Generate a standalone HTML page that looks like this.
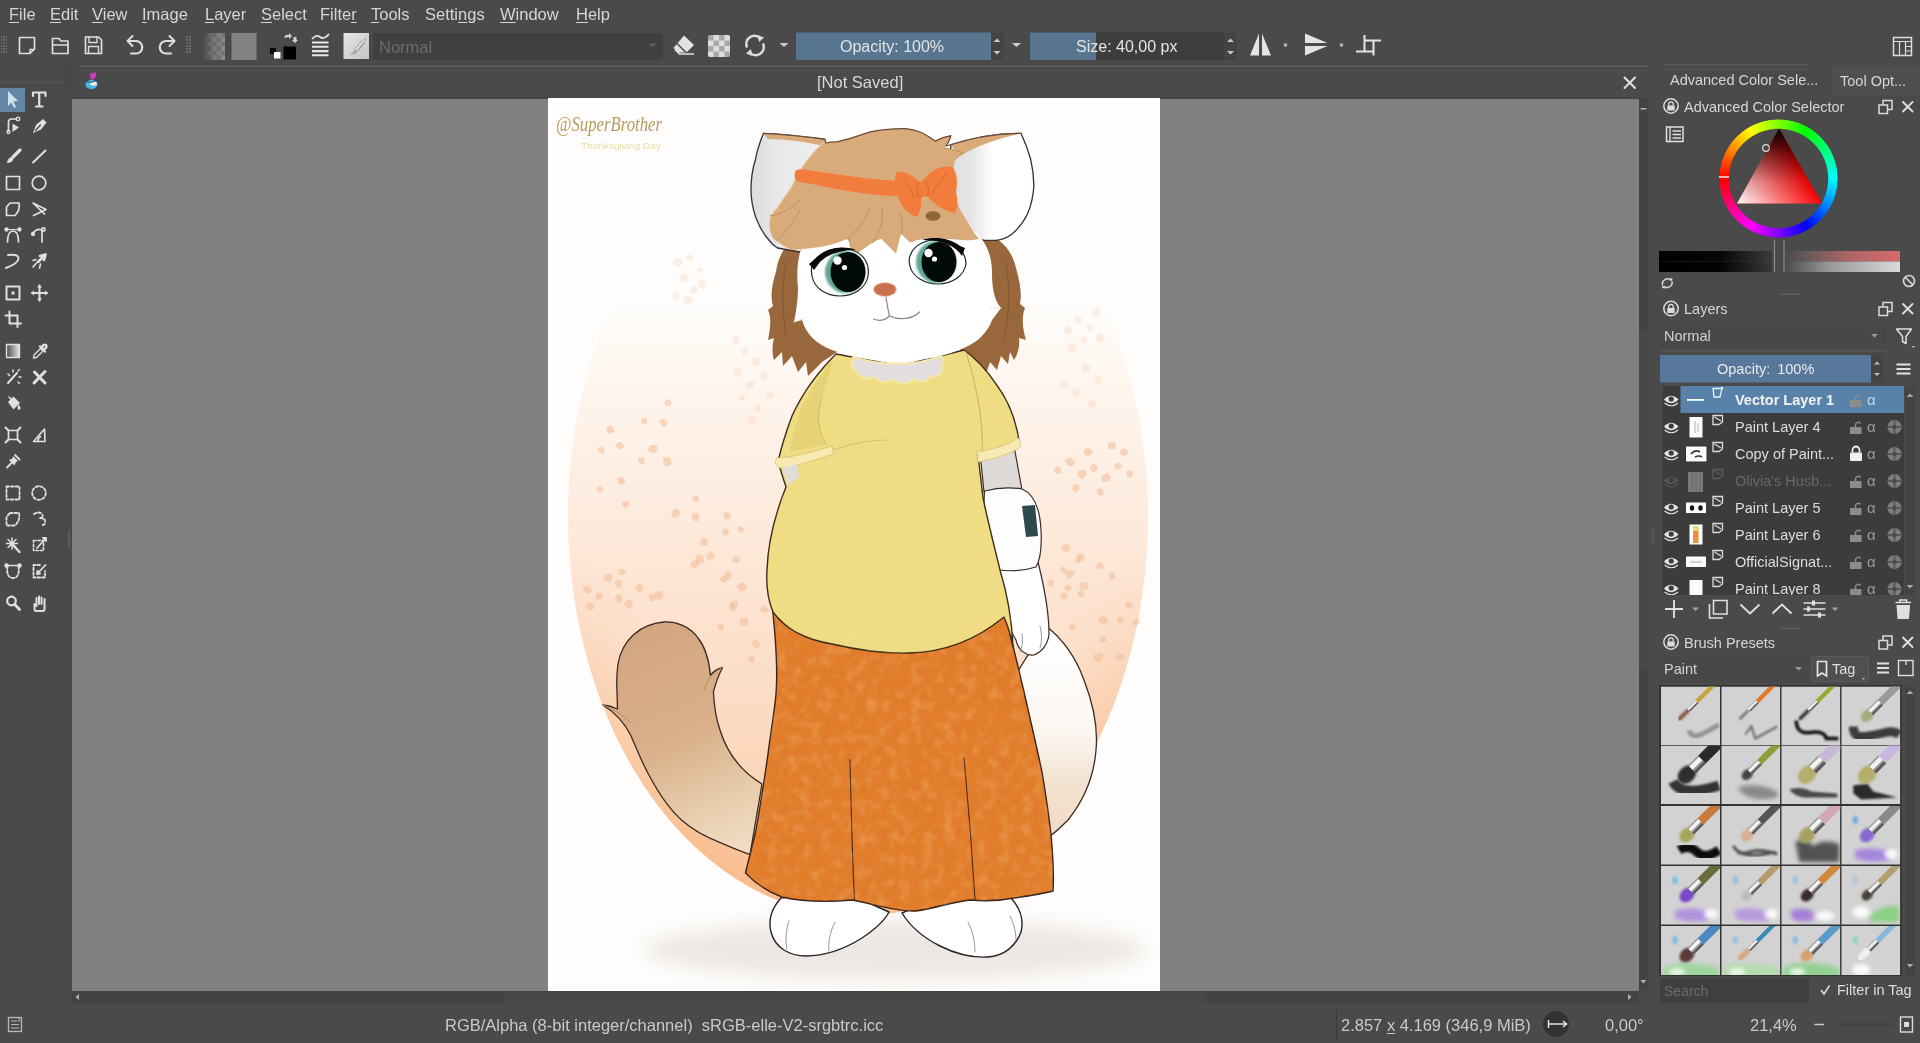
<!DOCTYPE html>
<html lang="en">
<head>
<meta charset="utf-8">
<title>Krita</title>
<style>
*{box-sizing:border-box;margin:0;padding:0}
html,body{width:1920px;height:1043px;overflow:hidden;background:#4a4a4a}
body{position:relative;font-family:"Liberation Sans","DejaVu Sans",sans-serif;font-size:15px;color:#d6d6d6}
.a{position:absolute}
.t{position:absolute;white-space:nowrap;line-height:20px;will-change:transform}
svg{position:absolute;overflow:visible}
/* menu */
#menubar{left:0;top:0;width:1920px;height:28px;background:#4a4a4a}
#menubar .t{top:4px;font-size:16.5px}
#menubar u{text-decoration-thickness:1px;text-underline-offset:2px}
/* toolbar */
#toolbar{left:0;top:28px;width:1920px;height:36px;background:#4a4a4a}
/* tab bar */
#tabbar{left:72px;top:66px;width:1576px;height:32px;background:#4a4a4a}
/* canvas */
#canvas{left:72px;top:98.500px;width:1567px;height:892.500px;background:#808080;box-shadow:0 -1.500px 0 #424242}
#page{left:548px;top:98px;width:612px;height:893px;background:#fff}
#vscroll{left:1639px;top:98px;width:9px;height:893px;background:#434343}
#hscroll{left:72px;top:991px;width:1567px;height:12px;background:#434343}
/* status */
#status{left:0;top:1005px;width:1920px;height:38px}
#status .t{top:10px;font-size:16.5px;color:#c9c9c9}
/* dock */
#dock{left:1656px;top:66px;width:264px;height:939px}
.dtitle{font-size:14.5px;color:#d6d6d6}
</style>
</head>
<body>
<div id="menubar" class="a">
<span class="t" style="left:9px"><u>F</u>ile</span>
<span class="t" style="left:50px"><u>E</u>dit</span>
<span class="t" style="left:92px"><u>V</u>iew</span>
<span class="t" style="left:142px"><u>I</u>mage</span>
<span class="t" style="left:205px"><u>L</u>ayer</span>
<span class="t" style="left:261px"><u>S</u>elect</span>
<span class="t" style="left:320px">Filte<u>r</u></span>
<span class="t" style="left:371px"><u>T</u>ools</span>
<span class="t" style="left:425px">Setti<u>n</u>gs</span>
<span class="t" style="left:500px"><u>W</u>indow</span>
<span class="t" style="left:576px"><u>H</u>elp</span>
</div>
<div id="toolbar" class="a">
<!--TB0--><svg style="left:0;top:0" width="1920" height="36" viewBox="0 28 1920 36">
<defs>
<pattern id="grip" width="3" height="3" patternUnits="userSpaceOnUse"><rect width="3" height="3" fill="#4a4a4a"/><rect x="0" y="0" width="2" height="2" fill="#6a6a6a"/></pattern>
<pattern id="chk" x="203" y="33" width="9" height="9" patternUnits="userSpaceOnUse"><rect width="9" height="9" fill="#8c8c8c"/><rect width="4.5" height="4.5" fill="#767676"/><rect x="4.5" y="4.5" width="4.5" height="4.5" fill="#767676"/></pattern>
<pattern id="chk2" x="708" y="35" width="11" height="11" patternUnits="userSpaceOnUse"><rect width="11" height="11" fill="#dedede"/><rect width="5.5" height="5.5" fill="#a8a8a8"/><rect x="5.5" y="5.5" width="5.5" height="5.5" fill="#a8a8a8"/></pattern>
<linearGradient id="fadeL" x1="0" x2="1"><stop offset="0" stop-color="#4a4a4a"/><stop offset="0.45" stop-color="#4a4a4a" stop-opacity="0.3"/><stop offset="1" stop-color="#4a4a4a" stop-opacity="0"/></linearGradient>
<linearGradient id="bp" x1="0" x2="1" y1="0" y2="1"><stop offset="0" stop-color="#e6e6e6"/><stop offset="1" stop-color="#c4c4c4"/></linearGradient>
</defs>
<!-- grips -->
<rect x="1" y="36" width="6" height="18" fill="url(#grip)"/>
<rect x="185" y="36" width="6" height="18" fill="url(#grip)"/>
<g fill="none" stroke="#dedede" stroke-width="1.7" stroke-linejoin="round" stroke-linecap="round">
<!-- new -->
<path d="M19.5 37.5 H34.5 V49 L30 53.5 H19.5 Z"/>
<path d="M30 53 V49.5 H34" stroke-width="1.4"/>
<!-- open -->
<path d="M52.5 53.5 V38.5 H59 L61 41 H68 V53.5 Z"/>
<path d="M53 45 H68" />
<!-- save -->
<path d="M85.5 37 H98.5 L101.5 40 V53.5 H85.5 Z"/>
<path d="M89 37 V42.5 H97 V37" stroke-width="1.4"/>
<path d="M88.5 53 V46.5 H98.5 V53" stroke-width="1.4"/>
<!-- undo -->
<path d="M129 41 H136 A6 6 0 0 1 136 53.5 H131" stroke-width="2.2"/>
<path d="M132.5 36 L127.5 41 L132.5 46" stroke-width="2"/>
<!-- redo -->
<path d="M173 41 H166 A6 6 0 0 0 166 53.5 H171" stroke-width="2.2"/>
<path d="M169.500 36 L174.500 41 L169.500 46" stroke-width="2"/>
</g>
<!-- pattern swatch -->
<rect x="203" y="33" width="22" height="27" fill="url(#chk)"/>
<rect x="203" y="33" width="22" height="27" fill="url(#fadeL)"/>
<!-- gradient swatch -->
<rect x="231.500" y="33" width="25" height="27" fill="#828282"/>
<!-- fg/bg -->
<rect x="283.500" y="46.500" width="12.500" height="13" fill="#000"/>
<rect x="270" y="48" width="6" height="6" fill="#0a0a0a"/>
<rect x="274" y="52" width="6.500" height="6.500" fill="#fff"/>
<path d="M284 37 q2 -3 5 -2 l0 -2 l3 3 l-3 3 l0 -2 q-2 -0.500 -3 1z M295 43 l-3 -3 l1.500 0 l0 -3 l3 0 l0 3 l1.500 0z" fill="#d0d0d0"/>
<!-- brush settings -->
<g stroke="#e6e6e6" stroke-width="2.100" fill="none">
<path d="M312 42.500 H328.500 M312 46.800 H328.500 M312 51.100 H328.500 M312 55.300 H328.500"/>
<path d="M312 39 q4 -5 8 -2 t9 -3" stroke-width="1.800"/>
</g>
<!-- brush preset -->
<rect x="343.500" y="33" width="25.500" height="26" fill="url(#bp)"/>
<path d="M353 52 q4 -9 13 -14 q1 3 -3 8 q-4 5 -8 8 q-3 1 -5 0 q2 -1 3 -2z" fill="#a9a9a9"/>
<path d="M356 50 q4 -6 9 -10" stroke="#e8e8e8" stroke-width="1.500" fill="none"/>
<!-- combobox -->
<rect x="373" y="33" width="290" height="27" rx="2" fill="#404040"/>
<path d="M648.500 43.500 l4 4 l4 -4z" fill="#5e5e5e"/>
<!-- eraser -->
<path d="M684 35.500 L694 45 L686.500 52.500 H678 L673.500 48 Z" fill="#e2e2e2"/>
<path d="M675 49.500 L679.500 54 H694" stroke="#e2e2e2" stroke-width="1.600" fill="none"/>
<path d="M677 43.500 L686 52.500" stroke="#4a4a4a" stroke-width="1.600"/>
<!-- preserve alpha -->
<rect x="708" y="35" width="22" height="22" rx="2" fill="url(#chk2)"/>
<!-- reload -->
<g fill="none" stroke="#dedede" stroke-width="2.400">
<path d="M747 47.500 A8.200 8.200 0 0 1 760.500 38.500"/>
<path d="M763 43.500 A8.200 8.200 0 0 1 749.500 52.500"/>
</g>
<path d="M757.500 35 l6.500 2.500 l-5 4.500z M752.500 56 l-6.500 -2.500 l5 -4.500z" fill="#dedede"/>
<!-- small arrows -->
<path d="M779.500 43 l4.500 4 l4.500 -4z" fill="#cfcfcf"/>
<path d="M1012 43 l4.500 4 l4.500 -4z" fill="#cfcfcf"/>
<!-- opacity slider -->
<rect x="796" y="32.500" width="195" height="27.500" fill="#57758f"/>
<rect x="991" y="33" width="12" height="27" fill="#444"/>
<path d="M993.500 42 l3.500 -3.500 l3.500 3.500z M993.500 51 l3.500 3.500 l3.500 -3.500z" fill="#c8c8c8"/>
<!-- size slider -->
<rect x="1030" y="32.500" width="194" height="27.500" fill="#3d3d3d"/>
<rect x="1030" y="32.500" width="66" height="27.500" fill="#57758f"/>
<rect x="1224" y="33" width="13" height="27" fill="#444"/>
<path d="M1227 42 l3.500 -3.500 l3.500 3.500z M1227 51 l3.500 3.500 l3.500 -3.500z" fill="#c8c8c8"/>
<!-- mirror h -->
<path d="M1259 33.500 V55.500 H1250z M1262 33.500 V55.500 H1271z" fill="#e4e4e4"/>
<circle cx="1285.500" cy="45" r="1.800" fill="#bdbdbd"/>
<!-- mirror v -->
<path d="M1305 33.500 L1327.500 43 H1305z M1305 55.500 L1327.500 46 H1305z" fill="#e4e4e4"/>
<circle cx="1341.500" cy="45" r="1.800" fill="#bdbdbd"/>
<!-- wrap -->
<g stroke="#e4e4e4" stroke-width="2" fill="none">
<path d="M1364.500 35 V51.500 M1356 51.500 H1373 M1373.500 55.500 V40.500 M1365 40.500 H1381"/>
</g>
<!-- workspace chooser -->
<g stroke="#dcdcdc" stroke-width="1.500" fill="none">
<rect x="1893.500" y="37.500" width="18" height="18"/>
<path d="M1893.500 41.500 H1911.500 M1899.500 41.500 V55.500 M1905.500 41.500 V55.500 M1905.500 46.500 H1911.500 M1905.500 51 H1911.500" stroke-width="1.200"/>
</g>
</svg>
<span class="t" style="left:379px;top:9px;font-size:16.5px;color:#6b6b6b">Normal</span>
<span class="t" style="left:840px;top:9px;font-size:16px;color:#e4e4e4">Opacity: 100%</span>
<span class="t" style="left:1076px;top:9px;font-size:16px;color:#e4e4e4">Size: 40,00 px</span>
<!--TB1-->
</div>
<div id="tabbar" class="a">
<!--TA0--><div class="a tabline" style="left:8px;top:-2px;width:1568px;height:1px;background:#404040"></div><div class="a tabline" style="left:8px;top:-1px;width:1568px;height:1.500px;background:#5b5b5b"></div><div class="a tabline" style="left:8px;top:3.500px;width:1568px;height:1px;background:#525252"></div>
<svg style="left:12px;top:5px" width="16" height="20" viewBox="84 70 16 20">
<path d="M90 72 q2 -1 3 1 l2 -2 q2 1 1 4 q-1 3 -5 4z" fill="#d13cc0"/>
<ellipse cx="91.500" cy="83.500" rx="6" ry="4.500" fill="#49b7e8"/>
<ellipse cx="93.500" cy="82.500" rx="3.500" ry="2" fill="#f0f0e6"/>
<path d="M86 80 q5 3 11 -1" stroke="#2a4a6a" stroke-width="1" fill="none"/>
</svg>
<span class="t" style="left:745px;top:6px;font-size:16.5px;color:#d8d8d8">[Not Saved]</span>
<svg style="left:1550px;top:9px" width="16" height="16" viewBox="0 0 16 16"><path d="M2.500 2.500 L13 13 M13 2.500 L2.500 13" stroke="#e4e4e4" stroke-width="2" stroke-linecap="round"/></svg>
<!--TA1-->
</div>
<div id="toolbox" class="a" style="left:0;top:64px;width:70px;height:941px">
<!--TX0--><div class="a" style="left:0;top:18px;width:64px;height:1px;background:#565656"></div>
<div class="a" style="left:64px;top:0;width:7px;height:24px;background:#464646"></div>
<div class="a" style="left:0;top:24px;width:25px;height:24px;background:#6585a7"></div>
<svg style="left:0;top:0" width="70" height="560" viewBox="0 64 70 560">
<g fill="none" stroke="#e0e0e0" stroke-width="1.700" stroke-linecap="round" stroke-linejoin="round">
<!-- row 99 -->
<path d="M8 91 V106 L11.500 102.500 L14 108 L16 107 L13.500 101.500 L18 101 Z" fill="#cfe0ee" stroke="none"/>
<path d="M33 96 V92.500 H45.500 V96 M39.200 92.500 V106 M36 106.500 H42.500" stroke-width="2.200"/>
<!-- row 125 -->
<path d="M8.500 131 V122 q0 -3 3 -3 H16.500"/>
<circle cx="18" cy="119" r="1.800" stroke-width="1.300"/>
<circle cx="8.500" cy="132" r="1.500" stroke-width="1.300"/>
<path d="M12.500 123.500 V132 L19 127.500 Z" fill="#e0e0e0" stroke="none"/>
<path d="M33 133 L36 125 L43 119 L46.500 122.500 L41 129.500 Z" fill="#e0e0e0" stroke="none"/>
<path d="M35.500 130.500 L40.500 125" stroke="#4a4a4a" stroke-width="1.300"/>
<!-- row 156 -->
<path d="M20 150 L13 157" stroke-width="3.200"/>
<path d="M11.500 157 q-4 1 -4.500 6 q5 0 6.500 -4z" fill="#e0e0e0" stroke="none"/>
<path d="M33 162.500 L45.500 150.500" stroke-width="2"/>
<!-- row 183 -->
<rect x="6.500" y="176.500" width="13" height="13" />
<circle cx="39" cy="183" r="6.800"/>
<!-- row 209 -->
<path d="M10 203 H19 Q20.500 210 15 215.500 H6.500 V207 Z"/>
<path d="M44.500 214 L33 203 L46 209.500 L33.500 215.500"/>
<!-- row 235 -->
<path d="M7.500 242 Q7.500 231 13 231 Q18.500 231 18.500 242"/>
<path d="M6 229.500 H20" stroke-width="1.200"/>
<circle cx="6.500" cy="229.500" r="1.300" fill="#e0e0e0"/><circle cx="19.500" cy="229.500" r="1.300" fill="#e0e0e0"/>
<path d="M33 233 q4 -5 9 -3 M42 230 V242" />
<circle cx="33" cy="234" r="1.300" fill="#e0e0e0"/><circle cx="43.500" cy="229.500" r="1.600" />
<!-- row 261 -->
<path d="M8 255 q10 -1 10.500 3 q0.500 5 -12.500 10" stroke-width="2"/>
<path d="M45.500 254.500 L38 262 M45.500 254.500 L40 256 M45.500 254.500 L44 260" stroke-width="2.600"/>
<path d="M36.500 263 l-3.500 4 M40.500 264 l-1 4 M36 259.500 l-3 1" stroke-width="1.600"/>
<!-- row 293 -->
<rect x="6.500" y="286.500" width="13" height="13" stroke-width="2"/>
<rect x="11.500" y="291.500" width="3" height="3" fill="#e0e0e0" stroke="none"/>
<path d="M39.500 285.500 V300.500 M32 293 H47" stroke-width="2"/>
<path d="M39.500 284.500 l-2.500 3 h5z M39.500 301.500 l-2.500 -3 h5z M31 293 l3 -2.500 v5z M48 293 l-3 -2.500 v5z" fill="#e0e0e0" stroke="none"/>
<!-- row 319 -->
<path d="M9.500 311.500 V323.500 H21 M5.500 315.500 H17.500 V327" stroke-width="2"/>
</g>
</svg>
<svg style="left:0;top:270px" width="70" height="290" viewBox="0 334 70 290">
<defs><linearGradient id="tg" x1="0" x2="1"><stop offset="0" stop-color="#4a4a4a"/><stop offset="1" stop-color="#e6e6e6"/></linearGradient></defs>
<g fill="none" stroke="#e0e0e0" stroke-width="1.700" stroke-linecap="round" stroke-linejoin="round">
<!-- row 351 -->
<rect x="6.500" y="344.500" width="13" height="13" fill="url(#tg)" stroke-width="1.400"/>
<path d="M33.500 358 L34 355 L40.500 348.500 L43 351 L36.500 357.500 Z" stroke-width="1.400"/>
<path d="M40 346.500 L45 351.500 M41.500 348 q2 -4.500 4.500 -3 q2 2 -2.500 4.500" stroke-width="2.400"/>
<!-- row 377 -->
<path d="M8 383 L17 373" stroke-width="2"/>
<path d="M13 370 v2 M19 377 h2 M18 371 l1.500 -1.500 M8 374 l1.500 1.500 M18 382 l1.500 1.500" stroke-width="1.500"/>
<path d="M34 383 L45 371.500 M34.500 372 L45 383" stroke-width="3"/>
<!-- row 403 -->
<path d="M8 402 L13.500 396.500 L20 403 L13.500 409.500 Z" fill="#e0e0e0" stroke="none"/>
<path d="M18.500 404.500 q3 3 1.500 5 q-2.500 1 -2.500 -2z" fill="#e0e0e0" stroke="none"/>
<path d="M9 397 L13 401" stroke-width="1.500"/>
<!-- row 435 -->
<rect x="8.500" y="430.500" width="9" height="9" />
<path d="M5.500 427.500 l3 3 M20.500 427.500 l-3 3 M5.500 442.500 l3 -3 M20.500 442.500 l-3 -3" stroke-width="2"/>
<path d="M33.500 441.500 H45 L44.500 429 Z M38 441 q0 -3 2.500 -4.500" stroke-width="1.600"/>
<!-- row 461 -->
<path d="M13 456 L18 461 L16 462 L14.500 465.500 L9 460 L12.500 458.500 Z" fill="#e0e0e0" stroke="none"/>
<path d="M11.500 463 L7 467.500 M15 455 L19.500 459.500" stroke-width="1.800"/>
<!-- row 493 -->
<rect x="6.500" y="486.500" width="13" height="13" stroke-dasharray="2.600 2" stroke-width="1.800"/>
<circle cx="39" cy="493" r="6.800" stroke-dasharray="2.700 2" stroke-width="1.800"/>
<!-- row 519 -->
<path d="M10 513 H19 Q20.500 520 15 525.500 H6.500 V517 Z" stroke-dasharray="2.600 2" stroke-width="1.800"/>
<path d="M34 514 q5 -3 8 0 q2 3 -2 4 q6 0 5 5 q-1 3 -4 2" stroke-dasharray="2.600 2" stroke-width="1.800"/>
<!-- row 545 -->
<path d="M12 538 V549 M6.500 543.500 H17.500 M8 539.500 L16 547.500 M16 539.500 L8 547.500" stroke-width="1.500"/>
<path d="M13 545 L19.500 552" stroke-width="2.400"/>
<rect x="33.500" y="540.500" width="10" height="10" stroke-dasharray="2.400 1.800" stroke-width="1.600"/>
<path d="M37 548 L45.500 538.500 M43 538 h3 v3" stroke-width="1.800"/>
<!-- row 571 -->
<path d="M7.500 566 Q6 578 13 578 Q20 578 18.500 566" stroke-dasharray="2.600 2" stroke-width="1.800"/>
<path d="M6 565.500 H20" stroke-width="1.300"/>
<circle cx="6.500" cy="565.500" r="1.400" fill="#e0e0e0"/><circle cx="19.500" cy="565.500" r="1.400" fill="#e0e0e0"/>
<path d="M40 565 H33.500 V577.500 H45 V571" stroke-dasharray="2.600 2" stroke-width="1.800"/>
<path d="M37.500 573.500 L45.500 565 M37 574 l0.500 -3 l2.500 2.500z" stroke-width="1.800"/>
<!-- row 603 -->
<circle cx="11.500" cy="601" r="4.300" stroke-width="2.200"/>
<path d="M14.800 604.500 L19.500 609.500" stroke-width="2.800"/>
<path d="M34.500 604 V609 q0 2 2 2 h6 q2 0 2 -2 V599 M36.500 606 V598 M39 604 V596.500 M41.500 604 V597.500" stroke-width="2"/>
</g>
</svg>
<div class="a" style="left:68px;top:466px;width:2px;height:18px;background:#5c5c5c"></div>
<!--TX1-->
</div>
<div id="canvas" class="a"></div>
<div id="page" class="a"></div>
<!--AR0--><svg id="art" style="left:548px;top:98px" width="612" height="893" viewBox="548 98 612 893">
<defs>
<clipPath id="pageclip"><rect x="548" y="98" width="612" height="893"/></clipPath>
<linearGradient id="ovalg" gradientUnits="userSpaceOnUse" x1="0" y1="108" x2="0" y2="924"><stop offset="0" stop-color="#fffaf6" stop-opacity="0"/><stop offset="0.235" stop-color="#fffaf6" stop-opacity="0"/><stop offset="0.3" stop-color="#fff8f3"/><stop offset="0.38" stop-color="#fef3ea"/><stop offset="0.48" stop-color="#fdecdf"/><stop offset="0.6" stop-color="#fde4d2"/><stop offset="0.725" stop-color="#fcdcc4"/><stop offset="0.85" stop-color="#fbd3b4"/><stop offset="1" stop-color="#f9c6a0"/></linearGradient>
<radialGradient id="ovalrim" gradientUnits="userSpaceOnUse" cx="858" cy="420" r="500" gradientTransform="translate(858 420) scale(0.62 1) translate(-858 -420)"><stop offset="0.8" stop-color="#f8ad72" stop-opacity="0"/><stop offset="1" stop-color="#f8ad72" stop-opacity="0.45"/></radialGradient>
<linearGradient id="topfade" gradientUnits="userSpaceOnUse" x1="0" y1="98" x2="0" y2="520"><stop offset="0" stop-color="#fff"/><stop offset="0.5" stop-color="#fff" stop-opacity="0.75"/><stop offset="1" stop-color="#fff" stop-opacity="0"/></linearGradient>
<linearGradient id="tailg" gradientUnits="userSpaceOnUse" x1="650" y1="640" x2="740" y2="850"><stop offset="0" stop-color="#d3a782"/><stop offset="0.45" stop-color="#d9b08a"/><stop offset="0.8" stop-color="#e9cfb0"/><stop offset="1" stop-color="#f1dcc2"/></linearGradient>
<linearGradient id="tailw" gradientUnits="userSpaceOnUse" x1="0" y1="640" x2="0" y2="830"><stop offset="0" stop-color="#fff"/><stop offset="0.5" stop-color="#fbf6f0"/><stop offset="0.75" stop-color="#f3e2d0"/><stop offset="1" stop-color="#f1dcc6"/></linearGradient>
<linearGradient id="earL" gradientUnits="userSpaceOnUse" x1="752" y1="0" x2="800" y2="0"><stop offset="0" stop-color="#dcdcdc"/><stop offset="0.5" stop-color="#e8e8e8"/><stop offset="1" stop-color="#ececec"/></linearGradient>
<linearGradient id="earR" gradientUnits="userSpaceOnUse" x1="952" y1="0" x2="1034" y2="0"><stop offset="0" stop-color="#dedede"/><stop offset="0.25" stop-color="#e6e6e6"/><stop offset="0.5" stop-color="#ffffff"/><stop offset="1" stop-color="#ffffff"/></linearGradient>
<filter id="ab05" x="-5%" y="-5%" width="110%" height="110%"><feGaussianBlur stdDeviation="0.7"/></filter>
<filter id="ab1" x="-20%" y="-20%" width="140%" height="140%"><feGaussianBlur stdDeviation="1.1"/></filter>
<filter id="ab8" x="-30%" y="-60%" width="160%" height="220%"><feGaussianBlur stdDeviation="9"/></filter>
<g id="leaf"><path d="M0 -4 C2 -4.200 2.600 -1.600 4 -1 C5.600 -0.400 5 2.200 3 2.600 C2.400 4.600 -1 5 -2 3 C-4 3.600 -5.600 1 -4 -0.600 C-4.600 -2.600 -2 -4 0 -4Z"/></g>
<g id="cluster" fill="#f2a672"><use href="#leaf" x="0" y="0"/><use href="#leaf" x="14" y="-9" transform="rotate(30 14 -9)"/><use href="#leaf" x="-12" y="12"/><use href="#leaf" x="9" y="14" transform="rotate(-40 9 14)"/><use href="#leaf" x="24" y="8"/><use href="#leaf" x="-6" y="-16" transform="rotate(60 -6 -16)"/><use href="#leaf" x="20" y="26"/><use href="#leaf" x="-20" y="-4" transform="rotate(15 -20 -4)"/><use href="#leaf" x="2" y="30" transform="rotate(80 2 30)"/></g>
<linearGradient id="rimfade" gradientUnits="userSpaceOnUse" x1="0" y1="560" x2="0" y2="840"><stop offset="0" stop-color="#000"/><stop offset="1" stop-color="#fff"/></linearGradient><mask id="rimmask" maskUnits="userSpaceOnUse" x="548" y="98" width="612" height="893"><rect x="548" y="98" width="612" height="893" fill="url(#rimfade)"/></mask>
</defs>
<g clip-path="url(#pageclip)">
<rect x="548" y="98" width="612" height="893" fill="#fefdfb"/>
<!-- oval -->
<ellipse cx="858" cy="516" rx="290" ry="400" fill="url(#ovalg)"/>
<ellipse cx="858" cy="516" rx="290" ry="400" fill="url(#ovalrim)" mask="url(#rimmask)"/>
<g filter="url(#ab05)">
<use href="#leaf" transform="translate(668.0 403.0) rotate(117) scale(0.80)" fill="#f3bf9a" opacity="0.6"/>
<use href="#leaf" transform="translate(644.0 421.0) rotate(234) scale(0.78)" fill="#f3bf9a" opacity="0.6"/>
<use href="#leaf" transform="translate(663.5 422.6) rotate(193) scale(0.88)" fill="#f3bf9a" opacity="0.6"/>
<use href="#leaf" transform="translate(610.6 429.5) rotate(21) scale(0.93)" fill="#f3bf9a" opacity="0.6"/>
<use href="#leaf" transform="translate(620.0 445.6) rotate(13) scale(0.90)" fill="#f3bf9a" opacity="0.6"/>
<use href="#leaf" transform="translate(601.4 450.0) rotate(25) scale(0.78)" fill="#f3bf9a" opacity="0.6"/>
<use href="#leaf" transform="translate(653.0 449.0) rotate(153) scale(1.04)" fill="#f3bf9a" opacity="0.6"/>
<use href="#leaf" transform="translate(641.7 460.5) rotate(45) scale(0.83)" fill="#f3bf9a" opacity="0.6"/>
<use href="#leaf" transform="translate(667.0 461.7) rotate(226) scale(1.08)" fill="#f3bf9a" opacity="0.6"/>
<use href="#leaf" transform="translate(621.0 481.0) rotate(208) scale(0.89)" fill="#f3bf9a" opacity="0.6"/>
<use href="#leaf" transform="translate(600.0 489.0) rotate(351) scale(0.77)" fill="#f3bf9a" opacity="0.6"/>
<use href="#leaf" transform="translate(625.6 504.0) rotate(309) scale(0.85)" fill="#f3bf9a" opacity="0.6"/>
<use href="#leaf" transform="translate(695.8 498.5) rotate(52) scale(0.79)" fill="#f3bf9a" opacity="0.6"/>
<use href="#leaf" transform="translate(676.0 513.5) rotate(111) scale(1.04)" fill="#f3bf9a" opacity="0.6"/>
<use href="#leaf" transform="translate(695.8 517.0) rotate(65) scale(0.95)" fill="#f3bf9a" opacity="0.6"/>
<use href="#leaf" transform="translate(726.8 515.8) rotate(230) scale(0.88)" fill="#f3bf9a" opacity="0.6"/>
<use href="#leaf" transform="translate(740.6 529.6) rotate(197) scale(0.77)" fill="#f3bf9a" opacity="0.6"/>
<use href="#leaf" transform="translate(725.7 531.9) rotate(21) scale(0.82)" fill="#f3bf9a" opacity="0.6"/>
<use href="#leaf" transform="translate(703.8 542.0) rotate(245) scale(0.90)" fill="#f3bf9a" opacity="0.6"/>
<use href="#leaf" transform="translate(710.7 556.0) rotate(113) scale(0.95)" fill="#f3bf9a" opacity="0.6"/>
<use href="#leaf" transform="translate(736.0 559.5) rotate(163) scale(0.85)" fill="#f3bf9a" opacity="0.6"/>
<use href="#leaf" transform="translate(694.6 564.0) rotate(286) scale(0.99)" fill="#f3bf9a" opacity="0.6"/>
<use href="#leaf" transform="translate(728.0 575.6) rotate(88) scale(0.95)" fill="#f3bf9a" opacity="0.6"/>
<use href="#leaf" transform="translate(741.8 587.0) rotate(189) scale(1.06)" fill="#f3bf9a" opacity="0.6"/>
<use href="#leaf" transform="translate(732.6 607.8) rotate(263) scale(0.85)" fill="#f3bf9a" opacity="0.6"/>
<use href="#leaf" transform="translate(622.0 572.0) rotate(353) scale(0.79)" fill="#f3bf9a" opacity="0.6"/>
<use href="#leaf" transform="translate(608.0 578.0) rotate(151) scale(1.01)" fill="#f3bf9a" opacity="0.6"/>
<use href="#leaf" transform="translate(618.7 583.6) rotate(55) scale(0.92)" fill="#f3bf9a" opacity="0.6"/>
<use href="#leaf" transform="translate(587.6 589.4) rotate(14) scale(0.98)" fill="#f3bf9a" opacity="0.6"/>
<use href="#leaf" transform="translate(639.4 588.0) rotate(275) scale(0.95)" fill="#f3bf9a" opacity="0.6"/>
<use href="#leaf" transform="translate(599.0 596.0) rotate(315) scale(0.86)" fill="#f3bf9a" opacity="0.6"/>
<use href="#leaf" transform="translate(618.7 598.6) rotate(250) scale(0.96)" fill="#f3bf9a" opacity="0.6"/>
<use href="#leaf" transform="translate(652.0 597.4) rotate(209) scale(0.91)" fill="#f3bf9a" opacity="0.6"/>
<use href="#leaf" transform="translate(659.0 595.0) rotate(302) scale(1.08)" fill="#f3bf9a" opacity="0.6"/>
<use href="#leaf" transform="translate(590.0 606.6) rotate(171) scale(0.98)" fill="#f3bf9a" opacity="0.6"/>
<use href="#leaf" transform="translate(629.0 604.0) rotate(22) scale(1.00)" fill="#f3bf9a" opacity="0.6"/>
<use href="#leaf" transform="translate(699.7 559.5) rotate(233) scale(1.10)" fill="#f3bf9a" opacity="0.6"/>
<use href="#leaf" transform="translate(723.6 579.0) rotate(296) scale(0.85)" fill="#f3bf9a" opacity="0.6"/>
<use href="#leaf" transform="translate(734.0 605.0) rotate(139) scale(0.98)" fill="#f3bf9a" opacity="0.6"/>
<use href="#leaf" transform="translate(765.0 609.0) rotate(8) scale(0.91)" fill="#f3bf9a" opacity="0.6"/>
<use href="#leaf" transform="translate(721.0 627.0) rotate(60) scale(0.79)" fill="#f3bf9a" opacity="0.6"/>
<use href="#leaf" transform="translate(756.0 644.0) rotate(21) scale(1.02)" fill="#f3bf9a" opacity="0.6"/>
<use href="#leaf" transform="translate(751.7 659.0) rotate(47) scale(0.84)" fill="#f3bf9a" opacity="0.6"/>
<use href="#leaf" transform="translate(744.0 622.0) rotate(141) scale(1.05)" fill="#f3bf9a" opacity="0.6"/>
<use href="#leaf" transform="translate(1058.0 470.0) rotate(29) scale(0.91)" fill="#f3bf9a" opacity="0.6"/>
<use href="#leaf" transform="translate(1070.0 462.0) rotate(198) scale(1.06)" fill="#f3bf9a" opacity="0.6"/>
<use href="#leaf" transform="translate(1082.0 474.0) rotate(295) scale(1.05)" fill="#f3bf9a" opacity="0.6"/>
<use href="#leaf" transform="translate(1094.0 468.0) rotate(100) scale(0.90)" fill="#f3bf9a" opacity="0.6"/>
<use href="#leaf" transform="translate(1106.0 478.0) rotate(129) scale(1.06)" fill="#f3bf9a" opacity="0.6"/>
<use href="#leaf" transform="translate(1118.0 466.0) rotate(345) scale(0.80)" fill="#f3bf9a" opacity="0.6"/>
<use href="#leaf" transform="translate(1130.0 474.0) rotate(63) scale(0.83)" fill="#f3bf9a" opacity="0.6"/>
<use href="#leaf" transform="translate(1076.0 488.0) rotate(84) scale(0.92)" fill="#f3bf9a" opacity="0.6"/>
<use href="#leaf" transform="translate(1100.0 492.0) rotate(212) scale(0.84)" fill="#f3bf9a" opacity="0.6"/>
<use href="#leaf" transform="translate(1124.0 452.0) rotate(1) scale(0.90)" fill="#f3bf9a" opacity="0.6"/>
<use href="#leaf" transform="translate(1112.0 446.0) rotate(133) scale(0.95)" fill="#f3bf9a" opacity="0.6"/>
<use href="#leaf" transform="translate(1088.0 452.0) rotate(343) scale(0.99)" fill="#f3bf9a" opacity="0.6"/>
<use href="#leaf" transform="translate(1066.0 548.0) rotate(186) scale(0.97)" fill="#f3bf9a" opacity="0.6"/>
<use href="#leaf" transform="translate(1078.0 560.0) rotate(243) scale(0.77)" fill="#f3bf9a" opacity="0.6"/>
<use href="#leaf" transform="translate(1070.0 574.0) rotate(324) scale(1.02)" fill="#f3bf9a" opacity="0.6"/>
<use href="#leaf" transform="translate(1084.0 586.0) rotate(315) scale(1.03)" fill="#f3bf9a" opacity="0.6"/>
<use href="#leaf" transform="translate(1064.0 596.0) rotate(141) scale(0.89)" fill="#f3bf9a" opacity="0.6"/>
<use href="#leaf" transform="translate(1081.0 557.0) rotate(37) scale(0.97)" fill="#f3bf9a" opacity="0.6"/>
<use href="#leaf" transform="translate(1064.0 570.0) rotate(22) scale(0.77)" fill="#f3bf9a" opacity="0.6"/>
<use href="#leaf" transform="translate(1051.0 583.0) rotate(75) scale(0.81)" fill="#f3bf9a" opacity="0.6"/>
<use href="#leaf" transform="translate(1068.0 588.0) rotate(122) scale(0.77)" fill="#f3bf9a" opacity="0.6"/>
<use href="#leaf" transform="translate(1081.0 594.0) rotate(0) scale(0.80)" fill="#f3bf9a" opacity="0.6"/>
<use href="#leaf" transform="translate(1129.0 605.0) rotate(37) scale(0.88)" fill="#f3bf9a" opacity="0.6"/>
<use href="#leaf" transform="translate(1103.0 620.0) rotate(9) scale(1.06)" fill="#f3bf9a" opacity="0.6"/>
<use href="#leaf" transform="translate(1120.0 620.0) rotate(221) scale(0.80)" fill="#f3bf9a" opacity="0.6"/>
<use href="#leaf" transform="translate(1072.5 627.0) rotate(91) scale(0.87)" fill="#f3bf9a" opacity="0.6"/>
<use href="#leaf" transform="translate(1103.0 640.0) rotate(131) scale(0.79)" fill="#f3bf9a" opacity="0.6"/>
<use href="#leaf" transform="translate(1098.5 657.0) rotate(306) scale(1.10)" fill="#f3bf9a" opacity="0.6"/>
<use href="#leaf" transform="translate(1120.0 657.0) rotate(168) scale(0.92)" fill="#f3bf9a" opacity="0.6"/>
<use href="#leaf" transform="translate(1112.0 576.0) rotate(31) scale(0.79)" fill="#f3bf9a" opacity="0.6"/>
<use href="#leaf" transform="translate(1100.0 566.0) rotate(123) scale(0.84)" fill="#f3bf9a" opacity="0.6"/>
<use href="#leaf" transform="translate(1136.0 622.0) rotate(298) scale(0.81)" fill="#f3bf9a" opacity="0.6"/>
<use href="#leaf" transform="translate(678.0 262.0) rotate(8) scale(1.08)" fill="#f8d6c0" opacity="0.4"/>
<use href="#leaf" transform="translate(690.0 258.0) rotate(190) scale(0.80)" fill="#f8d6c0" opacity="0.4"/>
<use href="#leaf" transform="translate(700.0 270.0) rotate(196) scale(0.76)" fill="#f8d6c0" opacity="0.4"/>
<use href="#leaf" transform="translate(684.0 278.0) rotate(190) scale(1.09)" fill="#f8d6c0" opacity="0.4"/>
<use href="#leaf" transform="translate(694.0 290.0) rotate(311) scale(0.99)" fill="#f8d6c0" opacity="0.4"/>
<use href="#leaf" transform="translate(676.0 296.0) rotate(94) scale(0.88)" fill="#f8d6c0" opacity="0.4"/>
<use href="#leaf" transform="translate(702.0 284.0) rotate(60) scale(1.02)" fill="#f8d6c0" opacity="0.4"/>
<use href="#leaf" transform="translate(688.0 300.0) rotate(192) scale(1.02)" fill="#f8d6c0" opacity="0.4"/>
<use href="#leaf" transform="translate(745.0 352.0) rotate(119) scale(0.83)" fill="#f8d6c0" opacity="0.4"/>
<use href="#leaf" transform="translate(756.0 362.0) rotate(292) scale(1.09)" fill="#f8d6c0" opacity="0.4"/>
<use href="#leaf" transform="translate(738.0 372.0) rotate(307) scale(1.03)" fill="#f8d6c0" opacity="0.4"/>
<use href="#leaf" transform="translate(750.0 385.0) rotate(295) scale(1.01)" fill="#f8d6c0" opacity="0.4"/>
<use href="#leaf" transform="translate(764.0 376.0) rotate(82) scale(0.93)" fill="#f8d6c0" opacity="0.4"/>
<use href="#leaf" transform="translate(742.0 398.0) rotate(128) scale(0.76)" fill="#f8d6c0" opacity="0.4"/>
<use href="#leaf" transform="translate(758.0 408.0) rotate(10) scale(0.85)" fill="#f8d6c0" opacity="0.4"/>
<use href="#leaf" transform="translate(736.0 340.0) rotate(93) scale(0.99)" fill="#f8d6c0" opacity="0.4"/>
<use href="#leaf" transform="translate(770.0 395.0) rotate(344) scale(0.91)" fill="#f8d6c0" opacity="0.4"/>
<use href="#leaf" transform="translate(752.0 420.0) rotate(337) scale(1.10)" fill="#f8d6c0" opacity="0.4"/>
<use href="#leaf" transform="translate(1078.0 320.0) rotate(344) scale(0.88)" fill="#f8d6c0" opacity="0.4"/>
<use href="#leaf" transform="translate(1090.0 328.0) rotate(79) scale(0.83)" fill="#f8d6c0" opacity="0.4"/>
<use href="#leaf" transform="translate(1084.0 340.0) rotate(71) scale(0.82)" fill="#f8d6c0" opacity="0.4"/>
<use href="#leaf" transform="translate(1072.0 348.0) rotate(225) scale(1.07)" fill="#f8d6c0" opacity="0.4"/>
<use href="#leaf" transform="translate(1096.0 312.0) rotate(303) scale(0.92)" fill="#f8d6c0" opacity="0.4"/>
<use href="#leaf" transform="translate(1100.0 338.0) rotate(235) scale(1.03)" fill="#f8d6c0" opacity="0.4"/>
<use href="#leaf" transform="translate(1068.0 330.0) rotate(31) scale(0.98)" fill="#f8d6c0" opacity="0.4"/>
<use href="#leaf" transform="translate(1086.0 368.0) rotate(328) scale(1.02)" fill="#f8d6c0" opacity="0.4"/>
<use href="#leaf" transform="translate(1098.0 380.0) rotate(270) scale(0.92)" fill="#f8d6c0" opacity="0.4"/>
<use href="#leaf" transform="translate(1076.0 392.0) rotate(64) scale(1.03)" fill="#f8d6c0" opacity="0.4"/>
<use href="#leaf" transform="translate(1092.0 404.0) rotate(120) scale(1.03)" fill="#f8d6c0" opacity="0.4"/>
<use href="#leaf" transform="translate(1064.0 384.0) rotate(350) scale(0.89)" fill="#f8d6c0" opacity="0.4"/>
</g>
<!-- ground shadow -->
<ellipse cx="895" cy="950" rx="250" ry="30" fill="#e6dfda" opacity="0.700" filter="url(#ab8)"/>
<!--C0--><defs><filter id="mottle" x="0" y="0" width="100%" height="100%"><feTurbulence type="fractalNoise" baseFrequency="0.09" numOctaves="2" seed="4" result="n"/><feColorMatrix type="matrix" values="0 0 0 0 0.95  0 0 0 0 0.6  0 0 0 0 0.27  0 0 0 2 -0.85"/></filter>
<filter id="mottle2" x="0" y="0" width="100%" height="100%"><feTurbulence type="fractalNoise" baseFrequency="0.07" numOctaves="2" seed="9"/><feColorMatrix type="matrix" values="0 0 0 0 0.86  0 0 0 0 0.74  0 0 0 0 0.36  0 0 0 1.8 -0.85"/></filter>
<clipPath id="skirtclip"><path d="M772 604 C776 640 778 668 776 694 C774 716 770 736 768 754 C764 782 760 808 756 830 C752 848 748 862 745.500 873 C756 884 768 892 782 897 C804 902 830 902 852 900 C874 904 896 912 916 911 C936 908 952 902 970 900 C990 902 1004 900 1014 898 C1028 896 1042 894 1053 891 C1054 876 1053 860 1052 846 C1050 820 1046 796 1042 772 C1036 744 1030 718 1024 692 C1018 666 1012 640 1005 616 L900 600 Z"/></clipPath><clipPath id="dressclip"><path d="M836 354 C818 372 802 394 792 416 C786 432 781 448 778 462 L786 487 C776 512 768 540 767 570 C766 586 768 600 773 612 C786 630 808 640 832 644 C858 650 884 654 910 653 C944 652 976 640 1004 617 C1008 626 1011 636 1013 647 C1012 624 1008 596 1000 570 C994 545 988 522 983 498 L978 455 L1019 441 C1016 420 1008 400 996 384 C988 372 978 360 964 350 L900 366 Z"/></clipPath></defs>
<g stroke-linejoin="round" stroke-linecap="round">
<!-- tan tail (left) -->
<path d="M762 784 C742 772 728 756 720 730 C715 716 714 704 713.400 692 C716 682 719 674 722.600 667.500 C717 669 713 672 710.400 675.200 C709 660 706 648 698 638 C690 626 676 621.500 664 622 C640 624 622 640 618 664 C616.500 674 616.800 680 616.800 686 L617.500 709 C613 707 608 705.500 603 705 C614 712 624 722 630.600 735 C638 752 643 765 649 775 C660 796 670 810 682.700 821 C694 831 706 837 719.600 842.400 C730 847 740 851 750 854.700 Z" fill="url(#tailg)" stroke="#3a2a22" stroke-width="1.300"/>
<path d="M704 690 C707 680 713 672 722.600 667.500 M603 705 C614 709 624 716 630.500 722.500" fill="none" stroke="#b98a62" stroke-width="1"/>
<!-- white tail (right) -->
<path d="M1046 626 C1064 640 1076 658 1084 680 C1094 706 1098 730 1096 750 C1094 776 1084 800 1068 820 C1062 826 1056 832 1050 836 L1000 700 Z" fill="url(#tailw)" stroke="#3a2a22" stroke-width="1.300"/>
<!-- feet -->
<path d="M781 898 C772 908 768 920 771 932 C775 948 790 956 806 956 C826 956 846 948 862 938 C874 930 884 922 889 912 L840 890 Z" fill="#fff" stroke="#2a2222" stroke-width="1.400"/>
<path d="M902 913 C910 926 924 938 940 946 C956 954 972 958 988 957 C1004 956 1016 946 1021 932 C1024 920 1020 908 1011 898 L950 892 Z" fill="#fff" stroke="#2a2222" stroke-width="1.400"/>
<path d="M789 921 C786 930 785 940 787 949 M835 922 C830 932 828 942 829 951 M968 922 C973 932 975 942 975 952 M1010 916 C1014 924 1016 932 1016 940" fill="none" stroke="#8a8a8a" stroke-width="0.900"/>
<!-- dark brown back hair -->
<path d="M800 236 C786 242 778 256 776 272 C772 284 770 296 773 306 L768 310 C772 318 770 330 768 340 L774 338 C772 346 772 354 774 360 L782 352 L783 366 L792 356 L798 372 L806 362 L808 376 L822 362 L840 350 L830 300 L812 250 Z" fill="#98673b"/>
<path d="M980 232 C1000 236 1012 250 1016 268 C1020 282 1022 294 1020 304 L1025 308 C1021 318 1023 330 1026 340 L1019 338 C1020 346 1018 354 1014 360 L1010 352 L1008 364 L1001 356 L997 370 L990 362 L986 374 L976 362 L960 350 L966 300 L975 250 Z" fill="#98673b"/>
<path d="M786 262 C782 284 782 310 786 336 M1006 262 C1010 286 1010 312 1004 340" fill="none" stroke="#855632" stroke-width="1"/>
<!-- right arm -->
<path d="M980 452 L984 492 L1022 490 L1014 446 Z" fill="#dddad8" stroke="#3a2a22" stroke-width="1.200"/>
<path d="M986 566 C992 590 1004 620 1016 640 C1018 650 1026 656 1034 655 C1042 652 1048 644 1049 634 C1049 610 1044 586 1038 562 Z" fill="#fff" stroke="#3a2a22" stroke-width="1.200"/>
<path d="M984.500 491 C996 488 1010 487 1022 489 C1034 494 1040 510 1041 530 C1042 548 1040 560 1036 567 C1020 572 1000 572 988 567 C984 540 983 515 984.500 491 Z" fill="#fdfdfd" stroke="#3a2a22" stroke-width="1.200"/>
<path d="M1022 506 L1035 505 L1038 536 L1026 537 Z" fill="#2d4a4a"/>
<path d="M1022 634 C1023 642 1022 648 1020 652 M1040 626 C1042 634 1042 642 1040 648" fill="none" stroke="#8a8a8a" stroke-width="0.900"/>
<!-- skirt -->
<path d="M772 604 C776 640 778 668 776 694 C774 716 770 736 768 754 C764 782 760 808 756 830 C752 848 748 862 745.500 873 C756 884 768 892 782 897 C804 902 830 902 852 900 C874 904 896 912 916 911 C936 908 952 902 970 900 C990 902 1004 900 1014 898 C1028 896 1042 894 1053 891 C1054 876 1053 860 1052 846 C1050 820 1046 796 1042 772 C1036 744 1030 718 1024 692 C1018 666 1012 640 1005 616 L900 600 Z" fill="#e17c2b" stroke="#3a2218" stroke-width="1.400"/>
<path d="M850 759.500 C851 800 852 850 854.500 900 M964 758 C968 800 972 850 975 900" fill="none" stroke="#4a2a18" stroke-width="1.100"/>
<g clip-path="url(#skirtclip)"><rect x="740" y="596" width="320" height="320" filter="url(#mottle)" opacity="0.32"/></g>
<!-- dress body -->
<path d="M836 354 C818 372 802 394 792 416 C786 432 781 448 778 462 L786 487 C776 512 768 540 767 570 C766 586 768 600 773 612 C786 630 808 640 832 644 C858 650 884 654 910 653 C944 652 976 640 1004 617 C1008 626 1011 636 1013 647 C1012 624 1008 596 1000 570 C994 545 988 522 983 498 L978 455 L1019 441 C1016 420 1008 400 996 384 C988 372 978 360 964 350 L900 366 Z" fill="#f0dc82" stroke="#3a2a1a" stroke-width="1.400"/>
<g clip-path="url(#dressclip)"><rect x="760" y="345" width="265" height="315" filter="url(#mottle2)" opacity="0.45"/></g>
<!-- chest fold / belly line -->
<path d="M834 358 C820 376 806 396 798 418 C794 430 792 440 790 452 L826 444 C818 430 816 414 822 398 C826 384 830 370 834 358 Z" fill="#dcc566" opacity="0.45"/>
<path d="M822 398 C816 414 818 430 826 444 M832 450 C850 444 870 440 886 440" fill="none" stroke="#d6c066" stroke-width="1.200"/>
<path d="M966 352 C978 390 984 426 982 456" fill="none" stroke="#c8b25a" stroke-width="1"/>
<!-- sleeve cuffs -->
<path d="M777 458 C790 458 812 452 832 446 L834 454 C814 460 792 468 780 468 C775 466 774 460 777 458 Z" fill="#f6e9b2" stroke="#d8c070" stroke-width="0.800"/>
<path d="M977 452 C990 450 1006 446 1018 438 C1021 440 1021 446 1019 448 C1006 456 990 460 978 462 Z" fill="#f6e9b2" stroke="#d8c070" stroke-width="0.800"/>
<!-- left arm stub under cuff -->
<path d="M782 468 L788 486 L800 476 L796 464 Z" fill="#e2dcd6"/>
<!-- ears -->
<path d="M763.500 133.300 C760 142 757 150 755.600 159 C752 170 751 180 751 190 C751 200 753 209 755.600 217 C759 226 763 233 768 239 C771 243 774 246 777.500 248 L800 252 L832 200 L825 140 C806 137 784 134 763.500 133.300 Z" fill="url(#earL)" stroke="#3a3030" stroke-width="1.300"/>
<path d="M763.500 133.300 C784 134 806 137 825 140 L824 146 C806 142 786 139 768 139 Z" fill="#d9aa7a"/>
<path d="M951 145 C975 137 1000 133 1021 133.300 C1025 142 1028 150 1030.600 159 C1033 169 1034 178 1033.800 187 C1033 197 1031 206 1027.500 214 C1023 223 1018 229 1012 234 C1007 238 1001 240 996 240.300 C992 240.500 988 240.500 984 240.300 L960 232 L946 180 Z" fill="url(#earR)" stroke="#3a3030" stroke-width="1.300"/>
<path d="M951 145 C975 137 1000 133 1020 133.800 C1000 138 978 145 960 156 Z" fill="#d9aa7a"/>
<!-- head (white face) -->
<path d="M806 236 C798 252 796 270 798 288 C798 300 796 312 794 322 L802 320 C806 334 816 344 832 350 C852 358 876 361 898 361 C922 361 946 356 964 348 C978 342 988 332 992 320 L1001 308 C994 300 992 288 992 272 C992 256 986 242 976 232 L900 220 Z" fill="#ffffff"/>
<path d="M794 322 L806 318 M1001 308 L990 308" stroke="#ece6e2" stroke-width="1" fill="none"/>
<!-- collar -->
<path d="M853 357 C850 364 852 370 858 372 C860 378 868 380 874 377 C878 383 888 384 893 379 C898 385 908 385 913 379 C918 383 928 382 931 376 C938 378 944 372 942 366 C944 362 943 358 941 356 C926 362 910 364 897 364 C882 364 866 361 853 357 Z" fill="#e3dde0" stroke="#f3e7a8" stroke-width="2.200"/>
<!-- tan hair top -->
<path d="M824.400 138.800 L826 143 C830 142 833 142 837 141.900 C845 140 852 138 858.800 135.600 C866 133 873 131 880.600 130.200 C888 129 896 128.500 904 128.600 C911 129 917 130.500 922.800 133.300 C927 135.500 931 138 935.300 141.100 C940 138.500 945 136.500 950.900 135.600 C950 140 947 144 944.700 148.100 C951 149 957 150.500 963.400 152.800 C960 155 958 157 955.600 159 C954.500 161.500 954 164 954 166.900 C953.300 172 953 177 953.300 182.500 C953.500 187 954 191 954.800 195 C957 204 961 212 966.600 220 C970 227 974 233 979 238.800 C974 240 969 240.500 963.400 240.300 C951 239 938 238 926 238.700 C920 239 915 240.500 910 242.500 L901 233.700 L896 253.700 L881 238.700 L872.500 242.500 L855 255 L847.500 238.700 C838 243 828 246 816 247.500 C808 248.500 799 249.500 791.600 249.700 C785 247 779 243 773.600 238.800 C770 233 769 227 769.700 220 C771 215 774 211 777.500 207.500 C782 200 787 194 791.600 187.200 C795 180 798 173 802.500 166.900 C809 157 816 149 824.400 141.900 Z" fill="#d9aa7a"/>
<path d="M763.500 133.300 C784 134 806 137 824.400 138.800 L826 143 C830 142 833 142 837 141.900 C845 140 852 138 858.800 135.600 C866 133 873 131 880.600 130.200 C888 129 896 128.500 904 128.600 C911 129 917 130.500 922.800 133.300 C927 135.500 931 138 935.300 141.100 C940 138.500 945 136.500 950.900 135.600 C950 140 948 143 946 146 C970 138 996 133.500 1021 133.300" fill="none" stroke="#6a4c36" stroke-width="1.200"/>
<path d="M944.700 148.100 C951 149 957 150.500 963.400 152.800 C960 155 958 157 955.600 159" fill="none" stroke="#b98a5c" stroke-width="0.900"/>
<path d="M824.400 141.900 C816 149 809 157 802.500 166.900 C798 173 795 180 791.600 187.200 C787 194 782 200 777.500 207.500 C774 211 771 215 769.700 220" fill="none" stroke="#e9c9a4" stroke-width="1.200"/>
<!-- hair strand lines -->
<path d="M770 216 C782 214 792 208 800 200 M847 239 C858 230 866 220 870 208 M872.500 243 C880 232 884 220 882 208 M901 234 C903 226 902 218 900 212 M776 241 C786 232 794 222 800 210 M855 255 C851 250 849 244 850 238" fill="none" stroke="#c2925e" stroke-width="1"/>
<!-- headband -->
<path d="M796 170 C802 168 808 170 814 171 C846 176 876 180 900 181 L900 196 C872 196 840 190 812 184 C806 183 800 182 797 181 C794 178 794 173 796 170 Z" fill="#f27c3c"/>
<!-- bow -->
<path d="M896 173 C902 170 912 174 919 182 L924 180 C930 170 942 165 952 167 C957 172 958 182 956 192 C958 200 958 208 955 213 C946 212 934 204 927 196 L921 197 C922 204 920 212 917 217 C908 214 900 206 898 196 C895 188 894 180 896 173 Z" fill="#f27c3c"/>
<path d="M919 182 C916 190 916 198 921 197 M924 180 C929 186 930 192 927 196 M903 178 C908 184 912 190 914 198 M948 172 C942 178 936 186 932 194" fill="none" stroke="#e0662a" stroke-width="1"/>
<ellipse cx="933" cy="216" rx="7.500" ry="4.800" fill="#8e6a38"/>
<!-- eyes -->
<g>
<path d="M813 262 C822 250 838 246 852 250 C864 254 870 264 868 276 C866 288 854 296 840 296 C826 296 814 288 812 276 C811 270 811 266 813 262 Z" fill="#fff" stroke="#1a2a2a" stroke-width="1.200"/>
<ellipse cx="845" cy="272" rx="20" ry="21" fill="#5ea596" filter="url(#ab1)"/>
<ellipse cx="848" cy="272" rx="17.500" ry="20" fill="#020a08"/>
<path d="M809 264 L816 258 C826 248 842 245 856 250 C846 250 830 252 820 262 L814 270 Z" fill="#0a0a0a"/>
<circle cx="837.500" cy="260.500" r="4.200" fill="#fff"/><circle cx="844.500" cy="267.500" r="2.600" fill="#fff"/>
</g>
<g>
<path d="M910 256 C914 244 928 238 942 240 C956 242 966 252 966 264 C964 276 952 284 938 284 C924 284 912 276 910 266 C909 262 909 258 910 256 Z" fill="#fff" stroke="#1a2a2a" stroke-width="1.200"/>
<ellipse cx="936" cy="262" rx="20" ry="21" fill="#5ea596" filter="url(#ab1)"/>
<ellipse cx="939" cy="262" rx="17.500" ry="20" fill="#020a08"/>
<path d="M922 240 C934 236 950 238 960 246 L965 248 L962 256 C956 246 942 240 922 240 Z" fill="#0a0a0a"/>
<circle cx="928.500" cy="253" r="4.200" fill="#fff"/><circle cx="934.500" cy="259" r="2.600" fill="#fff"/>
</g>
<!-- nose & mouth -->
<ellipse cx="885" cy="289.500" rx="11.500" ry="7" fill="#c9714f" stroke="#f4d0c8" stroke-width="1"/>
<path d="M886 297 C887 304 888 310 889.500 316 C884 321 878 321 873.500 319 M889.500 316 C898 320 912 320 919.500 312" fill="none" stroke="#8c8480" stroke-width="1.200"/>
</g>
<!-- signature -->
<text x="556" y="131" font-family="Liberation Serif,DejaVu Serif,serif" font-style="italic" font-size="21" fill="#b89a5e" textLength="106" lengthAdjust="spacingAndGlyphs">@SuperBrother</text>
<text x="581" y="149" font-family="Liberation Sans,DejaVu Sans,sans-serif" font-size="9.500" fill="#e8e0a8" textLength="80" lengthAdjust="spacingAndGlyphs">Thanksgiving Day</text>
<!--C1-->
</g>
</svg>
<!--AR1-->
<div id="vscroll" class="a"></div>
<div id="hscroll" class="a"></div>
<div class="a" style="left:505px;top:992px;width:700px;height:11px;background:#484848"></div>
<div class="a" style="left:1639px;top:330px;width:9px;height:340px;background:#474747"></div>
<svg style="left:72px;top:98px" width="1580" height="910" viewBox="72 98 1580 910"><path d="M79 994 l-3.500 3 l3.500 3z M1628 994 l3.500 3 l-3.500 3z M1640.500 108 h6 v1.500 h-6z M1640.500 980 l3 3.500 l3 -3.500z" fill="#b0b0b0"/><rect x="1652" y="527" width="1.500" height="18" fill="#5c5c5c"/></svg>
<div id="dock" class="a">
<!--DK0--><!-- coordinates inside #dock are relative to (1656,66); we use an inner wrapper shifted so absolute screen coords work -->
<div class="a" style="left:-1656px;top:-66px;width:1920px;height:1043px">
<!-- tabs -->
<div class="a" style="left:1664px;top:64px;width:144px;height:1px;background:#5d5d5d"></div>
<div class="a" style="left:1664px;top:69px;width:144px;height:1px;background:#585858"></div>
<div class="a" style="left:1832px;top:66px;width:88px;height:29px;background:#4f4f4f"></div>
<span class="t dtitle" style="left:1670px;top:70px;font-size:14.5px">Advanced Color Sele...</span>
<span class="t dtitle" style="left:1840px;top:71px;font-size:14.5px">Tool Opt...</span>
<!-- ACS title -->
<svg style="left:1656px;top:94px" width="264" height="210" viewBox="1656 94 264 210">
<defs>
<linearGradient id="sh1" x1="0" x2="1"><stop offset="0" stop-color="#000"/><stop offset="0.25" stop-color="#050505"/><stop offset="0.46" stop-color="#3a3a3a"/><stop offset="0.52" stop-color="#4a4a4a"/><stop offset="0.62" stop-color="#6a5a5a"/><stop offset="0.8" stop-color="#b26666"/><stop offset="1" stop-color="#d56a69"/></linearGradient>
<linearGradient id="sh2" x1="0" x2="1"><stop offset="0" stop-color="#000"/><stop offset="0.25" stop-color="#030303"/><stop offset="0.46" stop-color="#363636"/><stop offset="0.52" stop-color="#4a4a4a"/><stop offset="0.7" stop-color="#969696"/><stop offset="1" stop-color="#dadada"/></linearGradient>
<linearGradient id="triW" gradientUnits="userSpaceOnUse" x1="1737" y1="203.500" x2="1800.500" y2="166"><stop offset="0" stop-color="#fff"/><stop offset="1" stop-color="#fff" stop-opacity="0"/></linearGradient>
<linearGradient id="triK" gradientUnits="userSpaceOnUse" x1="1779" y1="128.500" x2="1779" y2="203.500"><stop offset="0" stop-color="#000"/><stop offset="0.35" stop-color="#000" stop-opacity="0.5"/><stop offset="0.7" stop-color="#000" stop-opacity="0.12"/><stop offset="1" stop-color="#000" stop-opacity="0"/></linearGradient>
<g id="lockic"><circle cx="8" cy="8" r="7.200" fill="none" stroke="#dcdcdc" stroke-width="1.500"/><rect x="4.300" y="7.500" width="7.400" height="5" fill="#dcdcdc"/><path d="M5.800 7.500 V6 a2.200 2.200 0 0 1 4.400 0 V7.500" fill="none" stroke="#dcdcdc" stroke-width="1.300"/></g>
<g id="floatic" fill="none" stroke="#dcdcdc" stroke-width="1.500"><rect x="1" y="5.500" width="8.500" height="8.500"/><path d="M5 5 V1 H14 V10 H10"/></g>
<g id="closeic"><path d="M1.500 1.500 L11 11 M11 1.500 L1.500 11" stroke="#e0e0e0" stroke-width="1.800" stroke-linecap="round"/></g>
</defs>
<use href="#lockic" x="1663" y="98"/>
<use href="#floatic" x="1878" y="99.500"/>
<use href="#closeic" x="1901.500" y="100.500"/>
<!-- config icon -->
<g fill="none" stroke="#e0e0e0" stroke-width="1.500"><rect x="1666.500" y="127" width="16.500" height="14.500"/><path d="M1670 127 V141 M1672.500 131 H1681 M1672.500 134.500 H1681 M1672.500 138 H1681" stroke-width="1.300"/></g>
<!-- triangle -->
<path d="M1779 128.500 L1822 203.500 L1737 203.500 Z" fill="#ff0000"/>
<path d="M1779 128.500 L1822 203.500 L1737 203.500 Z" fill="url(#triW)"/>
<path d="M1779 128.500 L1822 203.500 L1737 203.500 Z" fill="url(#triK)"/>
<circle cx="1766" cy="148" r="3.300" fill="none" stroke="#d8d8d8" stroke-width="1.200"/>
<!-- shade bars -->
<rect x="1659" y="251" width="241" height="10.500" fill="url(#sh1)"/>
<rect x="1659" y="261.500" width="241" height="10.500" fill="url(#sh2)"/>
<rect x="1772" y="240" width="14" height="32" fill="#4a4a4a"/>
<path d="M1774.500 240 V272 M1784 240 V272" stroke="#8a8a8a" stroke-width="1.200"/>
<!-- small icons -->
<g fill="none" stroke="#dcdcdc" stroke-width="1.500"><path d="M1662.500 285 a5 5 0 0 1 8.500 -4.500 M1672 281.500 a5 5 0 0 1 -8.500 4.500"/></g>
<path d="M1669.500 278 l3 0.500 l-0.500 3z M1665 288.500 l-3 -0.500 l0.500 -3z" fill="#dcdcdc"/>
<g fill="none" stroke="#dcdcdc" stroke-width="1.600"><circle cx="1909" cy="281" r="5.500"/><path d="M1905 277 L1913 285"/></g>
<rect x="1781" y="293.500" width="19" height="1.500" fill="#626262"/>
</svg>
<div class="a" style="left:1719px;top:118.500px;width:119px;height:119px;border-radius:50%;background:conic-gradient(from -90deg,#ff0000,#ffff00,#00ff00,#00ffff,#0000ff,#ff00ff,#ff0000);-webkit-mask:radial-gradient(circle closest-side,transparent 0,transparent 82.5%,#000 84.5%,#000 98.5%,transparent 100%);mask:radial-gradient(circle closest-side,transparent 0,transparent 82.5%,#000 84.5%,#000 98.5%,transparent 100%)"></div>
<div class="a" style="left:1719px;top:176px;width:10px;height:1.500px;background:#ffb0b0"></div>
<span class="t dtitle" style="left:1684px;top:96.500px;font-size:14.5px">Advanced Color Selector</span>
<!--L0--><svg style="left:1656px;top:296px" width="264" height="330" viewBox="1656 296 264 330">
<use href="#lockic" x="1663" y="300.500"/><use href="#floatic" x="1878" y="301.500"/><use href="#closeic" x="1901.500" y="302.500"/>
<rect x="1660" y="323" width="226" height="26" rx="2" fill="#484848"/>
<path d="M1871 334 l3.500 3.500 l3.500 -3.500z" fill="#9a9a9a"/>
<rect x="1660" y="350.500" width="226" height="1" fill="#5a5a5a"/>
<path d="M1896.500 329 H1911.500 L1906 336.500 V343.500 L1902.500 341.500 V336.500 Z" fill="none" stroke="#e0e0e0" stroke-width="1.500" stroke-linejoin="round"/><path d="M1912 346 l3 0 l-1.500 2z" fill="#cfcfcf"/>
<rect x="1660" y="355" width="211" height="27.500" fill="#57789b"/>
<rect x="1871" y="355" width="12" height="27.500" fill="#444"/>
<path d="M1874 364.500 l3 -3 l3 3z M1874 373 l3 3 l3 -3z" fill="#bdbdbd"/>
<path d="M1896.500 364.500 H1910.500 M1896.500 369 H1910.500 M1896.500 373.500 H1910.500" stroke="#e0e0e0" stroke-width="1.800"/>
<rect x="1663" y="386" width="241" height="209" fill="#3c3c3c"/>
<rect x="1680.500" y="386" width="223.500" height="27" fill="#5982aa"/>
<rect x="1905" y="386" width="10" height="209" fill="#444"/>
<path d="M1906.500 397 l3.500 -3.500 l3.500 3.500z M1906.500 585 l3.500 3.500 l3.500 -3.500z" fill="#a8a8a8"/>
<clipPath id="lc"><rect x="1656" y="386" width="250" height="209"/></clipPath><g clip-path="url(#lc)">
<path d="M1664 399.5 q7 -7.500 14.500 0 q-7.500 7.500 -14.500 0z" fill="#e4e4e4"/><circle cx="1671.200" cy="399.0" r="2.600" fill="#3c3c3c"/><path d="M1664.500 403.0 q7 5.500 13.500 0" fill="none" stroke="#e4e4e4" stroke-width="1.200"/>
<path d="M1713 388.5 H1722 L1720 397.0 H1714 Z" fill="none" stroke="#e6eef8" stroke-width="1.300"/><circle cx="1722" cy="388.0" r="1.200" fill="#e6eef8"/>
<rect x="1850" y="400.0" width="11.500" height="7" fill="#8c8c8c"/><path d="M1855.500 400.0 v-2.500 a2.800 2.800 0 0 1 5 -1" fill="none" stroke="#8c8c8c" stroke-width="1.500"/>
<text x="1867" y="405.0" font-family="Liberation Sans,DejaVu Sans,sans-serif" font-size="15" fill="#c4d4e4">α</text>
<path d="M1664 426.5 q7 -7.500 14.500 0 q-7.500 7.500 -14.500 0z" fill="#e4e4e4"/><circle cx="1671.200" cy="426.0" r="2.600" fill="#3c3c3c"/><path d="M1664.500 430.0 q7 5.500 13.500 0" fill="none" stroke="#e4e4e4" stroke-width="1.200"/>
<path d="M1713 415.5 H1722.500 V422.0 L1719 424.5 H1713 Z M1714.500 417.0 L1721 421.0" fill="none" stroke="#dcdcdc" stroke-width="1.300"/>
<rect x="1850" y="427.0" width="11.500" height="7" fill="#8c8c8c"/><path d="M1855.500 427.0 v-2.500 a2.800 2.800 0 0 1 5 -1" fill="none" stroke="#8c8c8c" stroke-width="1.500"/>
<text x="1867" y="432.0" font-family="Liberation Sans,DejaVu Sans,sans-serif" font-size="15" fill="#9a9a9a">α</text>
<circle cx="1894.500" cy="427.0" r="7" fill="#7d7d7d"/><path d="M1894.500 420.0 v14 M1887.500 427.0 h14" stroke="#5a5a5a" stroke-width="2"/><circle cx="1894.500" cy="427.0" r="2.200" fill="#4a4a4a"/>
<path d="M1664 453.5 q7 -7.500 14.500 0 q-7.500 7.500 -14.500 0z" fill="#e4e4e4"/><circle cx="1671.200" cy="453.0" r="2.600" fill="#3c3c3c"/><path d="M1664.500 457.0 q7 5.500 13.500 0" fill="none" stroke="#e4e4e4" stroke-width="1.200"/>
<path d="M1713 442.5 H1722.500 V449.0 L1719 451.5 H1713 Z M1714.500 444.0 L1721 448.0" fill="none" stroke="#dcdcdc" stroke-width="1.300"/>
<rect x="1850" y="452.5" width="12" height="8.500" rx="1" fill="#f0f0f0"/><path d="M1852.500 452.5 v-2.500 a3.500 3.500 0 0 1 7 0 v2.500" fill="none" stroke="#f0f0f0" stroke-width="1.800"/>
<text x="1867" y="459.0" font-family="Liberation Sans,DejaVu Sans,sans-serif" font-size="15" fill="#9a9a9a">α</text>
<circle cx="1894.500" cy="454.0" r="7" fill="#7d7d7d"/><path d="M1894.500 447.0 v14 M1887.500 454.0 h14" stroke="#5a5a5a" stroke-width="2"/><circle cx="1894.500" cy="454.0" r="2.200" fill="#4a4a4a"/>
<path d="M1664 480.5 q7 -7.500 14.500 0 q-7.500 7.500 -14.500 0z" fill="#555"/><circle cx="1671.200" cy="480.0" r="2.600" fill="#3c3c3c"/><path d="M1664.500 484.0 q7 5.500 13.500 0" fill="none" stroke="#555" stroke-width="1.200"/>
<path d="M1713 469.5 H1722.500 V476.0 L1719 478.5 H1713 Z M1714.500 471.0 L1721 475.0" fill="none" stroke="#5c5c5c" stroke-width="1.300"/>
<rect x="1850" y="481.0" width="11.500" height="7" fill="#8c8c8c"/><path d="M1855.500 481.0 v-2.500 a2.800 2.800 0 0 1 5 -1" fill="none" stroke="#8c8c8c" stroke-width="1.500"/>
<text x="1867" y="486.0" font-family="Liberation Sans,DejaVu Sans,sans-serif" font-size="15" fill="#9a9a9a">α</text>
<circle cx="1894.500" cy="481.0" r="7" fill="#7d7d7d"/><path d="M1894.500 474.0 v14 M1887.500 481.0 h14" stroke="#5a5a5a" stroke-width="2"/><circle cx="1894.500" cy="481.0" r="2.200" fill="#4a4a4a"/>
<path d="M1664 507.5 q7 -7.500 14.500 0 q-7.500 7.500 -14.500 0z" fill="#e4e4e4"/><circle cx="1671.200" cy="507.0" r="2.600" fill="#3c3c3c"/><path d="M1664.500 511.0 q7 5.500 13.500 0" fill="none" stroke="#e4e4e4" stroke-width="1.200"/>
<path d="M1713 496.5 H1722.500 V503.0 L1719 505.5 H1713 Z M1714.500 498.0 L1721 502.0" fill="none" stroke="#dcdcdc" stroke-width="1.300"/>
<rect x="1850" y="508.0" width="11.500" height="7" fill="#8c8c8c"/><path d="M1855.500 508.0 v-2.500 a2.800 2.800 0 0 1 5 -1" fill="none" stroke="#8c8c8c" stroke-width="1.500"/>
<text x="1867" y="513.0" font-family="Liberation Sans,DejaVu Sans,sans-serif" font-size="15" fill="#9a9a9a">α</text>
<circle cx="1894.500" cy="508.0" r="7" fill="#7d7d7d"/><path d="M1894.500 501.0 v14 M1887.500 508.0 h14" stroke="#5a5a5a" stroke-width="2"/><circle cx="1894.500" cy="508.0" r="2.200" fill="#4a4a4a"/>
<path d="M1664 534.5 q7 -7.500 14.500 0 q-7.500 7.500 -14.500 0z" fill="#e4e4e4"/><circle cx="1671.200" cy="534.0" r="2.600" fill="#3c3c3c"/><path d="M1664.500 538.0 q7 5.500 13.500 0" fill="none" stroke="#e4e4e4" stroke-width="1.200"/>
<path d="M1713 523.5 H1722.500 V530.0 L1719 532.5 H1713 Z M1714.500 525.0 L1721 529.0" fill="none" stroke="#dcdcdc" stroke-width="1.300"/>
<rect x="1850" y="535.0" width="11.500" height="7" fill="#8c8c8c"/><path d="M1855.500 535.0 v-2.500 a2.800 2.800 0 0 1 5 -1" fill="none" stroke="#8c8c8c" stroke-width="1.500"/>
<text x="1867" y="540.0" font-family="Liberation Sans,DejaVu Sans,sans-serif" font-size="15" fill="#9a9a9a">α</text>
<circle cx="1894.500" cy="535.0" r="7" fill="#7d7d7d"/><path d="M1894.500 528.0 v14 M1887.500 535.0 h14" stroke="#5a5a5a" stroke-width="2"/><circle cx="1894.500" cy="535.0" r="2.200" fill="#4a4a4a"/>
<path d="M1664 561.5 q7 -7.500 14.500 0 q-7.500 7.500 -14.500 0z" fill="#e4e4e4"/><circle cx="1671.200" cy="561.0" r="2.600" fill="#3c3c3c"/><path d="M1664.500 565.0 q7 5.500 13.500 0" fill="none" stroke="#e4e4e4" stroke-width="1.200"/>
<path d="M1713 550.5 H1722.500 V557.0 L1719 559.5 H1713 Z M1714.500 552.0 L1721 556.0" fill="none" stroke="#dcdcdc" stroke-width="1.300"/>
<rect x="1850" y="562.0" width="11.500" height="7" fill="#8c8c8c"/><path d="M1855.500 562.0 v-2.500 a2.800 2.800 0 0 1 5 -1" fill="none" stroke="#8c8c8c" stroke-width="1.500"/>
<text x="1867" y="567.0" font-family="Liberation Sans,DejaVu Sans,sans-serif" font-size="15" fill="#9a9a9a">α</text>
<circle cx="1894.500" cy="562.0" r="7" fill="#7d7d7d"/><path d="M1894.500 555.0 v14 M1887.500 562.0 h14" stroke="#5a5a5a" stroke-width="2"/><circle cx="1894.500" cy="562.0" r="2.200" fill="#4a4a4a"/>
<path d="M1664 588.5 q7 -7.500 14.500 0 q-7.500 7.500 -14.500 0z" fill="#e4e4e4"/><circle cx="1671.200" cy="588.0" r="2.600" fill="#3c3c3c"/><path d="M1664.500 592.0 q7 5.500 13.500 0" fill="none" stroke="#e4e4e4" stroke-width="1.200"/>
<path d="M1713 577.5 H1722.500 V584.0 L1719 586.5 H1713 Z M1714.500 579.0 L1721 583.0" fill="none" stroke="#dcdcdc" stroke-width="1.300"/>
<rect x="1850" y="589.0" width="11.500" height="7" fill="#8c8c8c"/><path d="M1855.500 589.0 v-2.500 a2.800 2.800 0 0 1 5 -1" fill="none" stroke="#8c8c8c" stroke-width="1.500"/>
<text x="1867" y="594.0" font-family="Liberation Sans,DejaVu Sans,sans-serif" font-size="15" fill="#9a9a9a">α</text>
<circle cx="1894.500" cy="589.0" r="7" fill="#7d7d7d"/><path d="M1894.500 582.0 v14 M1887.500 589.0 h14" stroke="#5a5a5a" stroke-width="2"/><circle cx="1894.500" cy="589.0" r="2.200" fill="#4a4a4a"/>
<rect x="1687" y="399" width="17" height="1.800" fill="#fff"/>
<rect x="1689.500" y="417" width="13" height="20.500" fill="#fbfbfb"/><path d="M1695 421 v12 M1698 423 v9" stroke="#ccc" stroke-width="1.500"/>
<rect x="1685.500" y="446" width="21.500" height="16" fill="#fbfbfb" stroke="#2e2e2e" stroke-width="1"/><path d="M1691 454 q4 -5 9 -2 M1695 457 q4 -2 7 0" fill="none" stroke="#333" stroke-width="1.600"/>
<rect x="1688" y="472" width="15" height="20" fill="#7a7a7a"/><path d="M1692 472 v20 M1696 472 v20 M1700 472 v20" stroke="#686868" stroke-width="1"/>
<rect x="1686" y="502.500" width="20" height="10.500" fill="#fbfbfb"/><ellipse cx="1692" cy="508" rx="2.200" ry="2.800" fill="#111"/><ellipse cx="1700.500" cy="508" rx="2.200" ry="2.800" fill="#111"/>
<rect x="1689.500" y="524.500" width="13" height="20" fill="#fbfbfb"/><rect x="1693" y="528" width="5.500" height="15" fill="#e8913a"/><rect x="1693" y="526" width="5.500" height="5" fill="#ecd77a"/>
<rect x="1686" y="556.500" width="20" height="10.500" fill="#fbfbfb"/><path d="M1690 562 h12" stroke="#d8d0c0" stroke-width="2"/>
<rect x="1689.500" y="580" width="13" height="18" fill="#fbfbfb"/>
</g>
<g fill="none" stroke="#e0e0e0" stroke-width="1.900">
<path d="M1674 600 V618 M1665 609 H1683"/>
<path d="M1713.500 600.500 H1727 V614 H1713.500 Z" stroke-width="1.600"/><path d="M1709.500 604 V618 H1723" stroke-width="1.600"/>
<path d="M1740.500 604.500 L1750 613.500 L1759.500 604.500"/>
<path d="M1772.500 613.500 L1782 604.500 L1791.500 613.500"/>
<path d="M1803.500 603 H1825.500 M1803.500 609 H1825.500 M1803.500 615 H1825.500" stroke-width="1.700"/>
</g>
<rect x="1812" y="600.500" width="3" height="5" fill="#e0e0e0"/><rect x="1807" y="606.500" width="3" height="5" fill="#e0e0e0"/><rect x="1818" y="612.500" width="3" height="5" fill="#e0e0e0"/>
<path d="M1692 607.500 l3.500 3.500 l3.500 -3.500z M1831.500 607.500 l3.500 3.500 l3.500 -3.500z" fill="#a0a0a0"/>
<path d="M1895.500 602.500 H1911 M1900 602 V600 H1906.500 V602" fill="none" stroke="#e0e0e0" stroke-width="1.700"/><path d="M1896.500 605 H1910 L1909 619 H1897.500 Z" fill="#e0e0e0"/>
</svg>
<span class="t dtitle" style="left:1684px;top:299px;font-size:14.5px">Layers</span>
<span class="t" style="left:1664px;top:326px;font-size:14.5px;color:#d2d2d2">Normal</span>
<span class="t" style="left:1717px;top:359px;font-size:14.5px;color:#eaeaea;word-spacing:3px">Opacity: 100%</span>
<div class="a" style="left:1656px;top:386px;width:250px;height:209px;overflow:hidden">
<span class="t" style="left:79px;top:3.5px;font-size:14.500px;font-weight:bold;color:#f2f2f2;">Vector Layer 1</span>
<span class="t" style="left:79px;top:30.5px;font-size:14.500px;color:#dedede;">Paint Layer 4</span>
<span class="t" style="left:79px;top:57.5px;font-size:14.500px;color:#dedede;">Copy of Paint...</span>
<span class="t" style="left:79px;top:84.5px;font-size:14.500px;color:#686868;">Olivia's Husb...</span>
<span class="t" style="left:79px;top:111.5px;font-size:14.500px;color:#dedede;">Paint Layer 5</span>
<span class="t" style="left:79px;top:138.5px;font-size:14.500px;color:#dedede;">Paint Layer 6</span>
<span class="t" style="left:79px;top:165.5px;font-size:14.500px;color:#dedede;">OfficialSignat...</span>
<span class="t" style="left:79px;top:192.5px;font-size:14.500px;color:#dedede;">Paint Layer 8</span>
</div>
<div class="a" style="left:1781px;top:627.500px;width:19px;height:1.500px;background:#626262"></div><!--L1-->
<!--B0--><svg style="left:1656px;top:630px" width="264" height="380" viewBox="1656 630 264 380">
<defs><filter id="bl1" x="-20%" y="-20%" width="140%" height="140%"><feGaussianBlur stdDeviation="1.2"/></filter><filter id="bl2" x="-20%" y="-20%" width="140%" height="140%"><feGaussianBlur stdDeviation="2.2"/></filter>
<linearGradient id="ferr" x1="0" y1="0" x2="1" y2="1"><stop offset="0" stop-color="#888"/><stop offset="0.45" stop-color="#f4f4f4"/><stop offset="1" stop-color="#777"/></linearGradient></defs>
<use href="#lockic" x="1663" y="634"/><use href="#floatic" x="1878" y="635"/><use href="#closeic" x="1901.500" y="636"/>
<rect x="1660" y="656" width="148" height="26" rx="2" fill="#484848"/><path d="M1795 667 l3.500 3.500 l3.500 -3.500z" fill="#9a9a9a"/>
<rect x="1811.500" y="656.500" width="57" height="25" rx="2" fill="#505050" stroke="#5c5c5c" stroke-width="1"/>
<path d="M1817.500 661.500 H1826.500 V676 L1822 673 L1817.500 676 Z" fill="none" stroke="#e6e6e6" stroke-width="1.700"/>
<path d="M1862 678 l3 0 l-1.500 2z" fill="#bbb"/>
<path d="M1877 663.500 H1889 M1877 668 H1889 M1877 672.500 H1889" stroke="#e0e0e0" stroke-width="1.800"/>
<rect x="1898.500" y="660.500" width="14.500" height="15" fill="none" stroke="#e0e0e0" stroke-width="1.400"/><path d="M1906 660 v5" stroke="#e0e0e0" stroke-width="1.300"/>
<rect x="1659" y="685" width="243" height="291" fill="#333"/>
<clipPath id="gc"><rect x="1659" y="685" width="243" height="290"/></clipPath><g clip-path="url(#gc)">
<svg x="1661" y="686.5" width="59" height="58.5" viewBox="0 0 59 58.5" preserveAspectRatio="xMinYMin slice" style="overflow:hidden"><rect width="59" height="59" fill="#d2d2d2"/>
<path d="M28 44 q3 8 12 4 t18 -10" stroke="#6a6a6a" stroke-width="5" fill="none" opacity="0.600" filter="url(#bl1)"/>
<path d="M19 32 L26.8 24.2" stroke="#8a5a4a" stroke-width="4.2" stroke-linecap="round" filter="url(#bl1)"/>
<path d="M27.5 23.5 L36.0 15.0" stroke="#9a9a9a" stroke-width="4.5"/>
<path d="M27.0 23.0 L35.5 14.6" stroke="#f4f4f4" stroke-width="1.8"/>
<path d="M28.6 24.6 L37.1 16.1" stroke="#5a5a5a" stroke-width="1.1"/>
<path d="M36.0 15.0 L64.3 -13.3" stroke="#c9a23a" stroke-width="4.3"/>
</svg>
<svg x="1721.3" y="686.5" width="59" height="58.5" viewBox="0 0 59 58.5" preserveAspectRatio="xMinYMin slice" style="overflow:hidden"><rect width="59" height="59" fill="#d2d2d2"/>
<path d="M24 48 l6 -8 l4 12 l22 -12" stroke="#666" stroke-width="2" fill="none" filter="url(#bl1)"/>
<path d="M19 32 L26.8 24.2" stroke="#777" stroke-width="2.8" stroke-linecap="round" filter="url(#bl1)"/>
<path d="M27.5 23.5 L36.0 15.0" stroke="#9a9a9a" stroke-width="4.5"/>
<path d="M27.0 23.0 L35.5 14.6" stroke="#f4f4f4" stroke-width="1.8"/>
<path d="M28.6 24.6 L37.1 16.1" stroke="#5a5a5a" stroke-width="1.1"/>
<path d="M36.0 15.0 L64.3 -13.3" stroke="#e07a2a" stroke-width="4.3"/>
</svg>
<svg x="1781.3" y="686.5" width="59" height="58.5" viewBox="0 0 59 58.5" preserveAspectRatio="xMinYMin slice" style="overflow:hidden"><rect width="59" height="59" fill="#d2d2d2"/>
<path d="M15 34 q0 14 14 12 t16 6 l12 0" stroke="#111" stroke-width="3.500" fill="none" filter="url(#bl1)"/>
<path d="M19 32 L26.8 24.2" stroke="#333" stroke-width="3.5" stroke-linecap="round" filter="url(#bl1)"/>
<path d="M27.5 23.5 L36.0 15.0" stroke="#9a9a9a" stroke-width="4.5"/>
<path d="M27.0 23.0 L35.5 14.6" stroke="#f4f4f4" stroke-width="1.8"/>
<path d="M28.6 24.6 L37.1 16.1" stroke="#5a5a5a" stroke-width="1.1"/>
<path d="M36.0 15.0 L64.3 -13.3" stroke="#9aa832" stroke-width="4.3"/>
</svg>
<svg x="1841.3" y="686.5" width="59" height="58.5" viewBox="0 0 59 58.5" preserveAspectRatio="xMinYMin slice" style="overflow:hidden"><rect width="59" height="59" fill="#d2d2d2"/>
<path d="M12 40 q0 12 12 10 t20 -4 t14 2" stroke="#222" stroke-width="9" fill="none" opacity="0.850" filter="url(#bl1)"/>
<ellipse cx="26" cy="29" rx="7.4" ry="5.6" transform="rotate(-45 26 29)" fill="#a4ad7a" filter="url(#bl1)"/>
<path d="M29.2 25.8 L39.1 15.9" stroke="#9a9a9a" stroke-width="8.0"/>
<path d="M28.3 25.0 L38.2 15.1" stroke="#f4f4f4" stroke-width="3.2"/>
<path d="M31.1 27.8 L41.0 17.9" stroke="#5a5a5a" stroke-width="2.0"/>
<path d="M39.1 15.9 L67.3 -12.3" stroke="#9a9a9a" stroke-width="7.6"/>
</svg>
<svg x="1661" y="745.5" width="59" height="58.5" viewBox="0 0 59 58.5" preserveAspectRatio="xMinYMin slice" style="overflow:hidden"><rect width="59" height="59" fill="#d2d2d2"/>
<path d="M12 36 q8 16 46 4" stroke="#222" stroke-width="10" fill="none" opacity="0.900" filter="url(#bl1)"/>
<ellipse cx="26" cy="29" rx="10.5" ry="8.0" transform="rotate(-45 26 29)" fill="#2f2f2f" filter="url(#bl1)"/>
<path d="M31.1 23.9 L41.0 14.0" stroke="#9a9a9a" stroke-width="11.5"/>
<path d="M29.9 22.7 L39.8 12.8" stroke="#f4f4f4" stroke-width="4.6"/>
<path d="M33.9 26.7 L43.8 16.8" stroke="#5a5a5a" stroke-width="2.9"/>
<path d="M41.0 14.0 L69.3 -14.3" stroke="#2a2a2a" stroke-width="10.9"/>
</svg>
<svg x="1721.3" y="745.5" width="59" height="58.5" viewBox="0 0 59 58.5" preserveAspectRatio="xMinYMin slice" style="overflow:hidden"><rect width="59" height="59" fill="#d2d2d2"/>
<path d="M16 42 q20 -6 40 4 l0 6 q-30 6 -40 -10z" fill="#777" opacity="0.800" filter="url(#bl2)"/>
<ellipse cx="26" cy="29" rx="6.3" ry="4.8" transform="rotate(-45 26 29)" fill="#444" filter="url(#bl1)"/>
<path d="M28.5 26.5 L38.4 16.6" stroke="#9a9a9a" stroke-width="6.9"/>
<path d="M27.8 25.8 L37.7 15.9" stroke="#f4f4f4" stroke-width="2.8"/>
<path d="M30.2 28.2 L40.1 18.3" stroke="#5a5a5a" stroke-width="1.7"/>
<path d="M38.4 16.6 L66.7 -11.7" stroke="#8e9e3a" stroke-width="6.6"/>
</svg>
<svg x="1781.3" y="745.5" width="59" height="58.5" viewBox="0 0 59 58.5" preserveAspectRatio="xMinYMin slice" style="overflow:hidden"><rect width="59" height="59" fill="#d2d2d2"/>
<path d="M8 44 q12 -4 22 2 l26 2 l0 4 l-34 0 q-10 -2 -14 -8z" fill="#3a3a3a" opacity="0.900" filter="url(#bl1)"/>
<ellipse cx="26" cy="29" rx="10.5" ry="8.0" transform="rotate(-45 26 29)" fill="#b5ad6a" filter="url(#bl1)"/>
<path d="M31.1 23.9 L41.0 14.0" stroke="#9a9a9a" stroke-width="11.5"/>
<path d="M29.9 22.7 L39.8 12.8" stroke="#f4f4f4" stroke-width="4.6"/>
<path d="M33.9 26.7 L43.8 16.8" stroke="#5a5a5a" stroke-width="2.9"/>
<path d="M41.0 14.0 L69.3 -14.3" stroke="#c8b8d8" stroke-width="10.9"/>
</svg>
<svg x="1841.3" y="745.5" width="59" height="58.5" viewBox="0 0 59 58.5" preserveAspectRatio="xMinYMin slice" style="overflow:hidden"><rect width="59" height="59" fill="#d2d2d2"/>
<path d="M12 40 l14 -2 l6 8 l24 6 l-36 2 l-8 -6z" fill="#2a2a2a" filter="url(#bl1)"/>
<ellipse cx="26" cy="29" rx="10.5" ry="8.0" transform="rotate(-45 26 29)" fill="#b5ad6a" filter="url(#bl1)"/>
<path d="M31.1 23.9 L41.0 14.0" stroke="#9a9a9a" stroke-width="11.5"/>
<path d="M29.9 22.7 L39.8 12.8" stroke="#f4f4f4" stroke-width="4.6"/>
<path d="M33.9 26.7 L43.8 16.8" stroke="#5a5a5a" stroke-width="2.9"/>
<path d="M41.0 14.0 L69.3 -14.3" stroke="#c8b8e0" stroke-width="10.9"/>
</svg>
<svg x="1661" y="806" width="59" height="58.5" viewBox="0 0 59 58.5" preserveAspectRatio="xMinYMin slice" style="overflow:hidden"><rect width="59" height="59" fill="#d2d2d2"/>
<path d="M18 44 q10 -6 18 2 t22 -2" stroke="#111" stroke-width="9" fill="none" filter="url(#bl1)"/>
<ellipse cx="26" cy="29" rx="8.4" ry="6.4" transform="rotate(-45 26 29)" fill="#a8a458" filter="url(#bl1)"/>
<path d="M29.8 25.2 L39.7 15.3" stroke="#9a9a9a" stroke-width="9.2"/>
<path d="M28.8 24.2 L38.7 14.3" stroke="#f4f4f4" stroke-width="3.7"/>
<path d="M32.1 27.5 L42.0 17.6" stroke="#5a5a5a" stroke-width="2.3"/>
<path d="M39.7 15.3 L68.0 -13.0" stroke="#c87a3a" stroke-width="8.7"/>
</svg>
<svg x="1721.3" y="806" width="59" height="58.5" viewBox="0 0 59 58.5" preserveAspectRatio="xMinYMin slice" style="overflow:hidden"><rect width="59" height="59" fill="#d2d2d2"/>
<path d="M12 40 q6 10 16 6 t28 2 M16 46 q14 6 38 0" stroke="#333" stroke-width="3" fill="none" opacity="0.800" filter="url(#bl1)"/>
<ellipse cx="26" cy="29" rx="7.4" ry="5.6" transform="rotate(-45 26 29)" fill="#d6b090" filter="url(#bl1)"/>
<path d="M29.2 25.8 L39.1 15.9" stroke="#9a9a9a" stroke-width="8.0"/>
<path d="M28.3 25.0 L38.2 15.1" stroke="#f4f4f4" stroke-width="3.2"/>
<path d="M31.1 27.8 L41.0 17.9" stroke="#5a5a5a" stroke-width="2.0"/>
<path d="M39.1 15.9 L67.3 -12.3" stroke="#555" stroke-width="7.6"/>
</svg>
<svg x="1781.3" y="806" width="59" height="58.5" viewBox="0 0 59 58.5" preserveAspectRatio="xMinYMin slice" style="overflow:hidden"><rect width="59" height="59" fill="#d2d2d2"/>
<path d="M14 36 q10 -6 18 4 q10 -8 26 -2 l0 18 l-40 0 z" fill="#3c3c3c" opacity="0.850" filter="url(#bl2)"/>
<ellipse cx="26" cy="29" rx="9.5" ry="7.2" transform="rotate(-45 26 29)" fill="#a8a060" filter="url(#bl1)"/>
<path d="M30.4 24.6 L40.3 14.7" stroke="#9a9a9a" stroke-width="10.3"/>
<path d="M29.3 23.5 L39.2 13.6" stroke="#f4f4f4" stroke-width="4.1"/>
<path d="M33.0 27.1 L42.9 17.2" stroke="#5a5a5a" stroke-width="2.6"/>
<path d="M40.3 14.7 L68.6 -13.6" stroke="#d0a8b8" stroke-width="9.8"/>
</svg>
<svg x="1841.3" y="806" width="59" height="58.5" viewBox="0 0 59 58.5" preserveAspectRatio="xMinYMin slice" style="overflow:hidden"><rect width="59" height="59" fill="#d2d2d2"/>
<path d="M14 44 q20 -4 34 2 l0 8 q-20 4 -34 -2z" fill="#9a72e0" opacity="0.800" filter="url(#bl2)"/><ellipse cx="50" cy="48" rx="7" ry="5" fill="#fff" opacity="0.900" filter="url(#bl2)"/>
<path d="M11 13 l3 -4 l3 4 l-1 5 l-4 0z" fill="#5aa8e8" opacity="0.800" filter="url(#bl1)"/>
<ellipse cx="26" cy="29" rx="8.4" ry="6.4" transform="rotate(-45 26 29)" fill="#8a6ad0" filter="url(#bl1)"/>
<path d="M29.8 25.2 L39.7 15.3" stroke="#9a9a9a" stroke-width="9.2"/>
<path d="M28.8 24.2 L38.7 14.3" stroke="#f4f4f4" stroke-width="3.7"/>
<path d="M32.1 27.5 L42.0 17.6" stroke="#5a5a5a" stroke-width="2.3"/>
<path d="M39.7 15.3 L68.0 -13.0" stroke="#8a8a8a" stroke-width="8.7"/>
</svg>
<svg x="1661" y="866" width="59" height="58.5" viewBox="0 0 59 58.5" preserveAspectRatio="xMinYMin slice" style="overflow:hidden"><rect width="59" height="59" fill="#d2d2d2"/>
<path d="M14 44 q20 -4 34 2 l0 8 q-20 4 -34 -2z" fill="#a882e0" opacity="0.800" filter="url(#bl2)"/><ellipse cx="50" cy="48" rx="7" ry="5" fill="#fff" opacity="0.900" filter="url(#bl2)"/>
<path d="M11 13 l3 -4 l3 4 l-1 5 l-4 0z" fill="#6ab8e8" opacity="0.800" filter="url(#bl1)"/>
<ellipse cx="26" cy="29" rx="8.4" ry="6.4" transform="rotate(-45 26 29)" fill="#7a4ac8" filter="url(#bl1)"/>
<path d="M29.8 25.2 L39.7 15.3" stroke="#9a9a9a" stroke-width="9.2"/>
<path d="M28.8 24.2 L38.7 14.3" stroke="#f4f4f4" stroke-width="3.7"/>
<path d="M32.1 27.5 L42.0 17.6" stroke="#5a5a5a" stroke-width="2.3"/>
<path d="M39.7 15.3 L68.0 -13.0" stroke="#6a6a3a" stroke-width="8.7"/>
</svg>
<svg x="1721.3" y="866" width="59" height="58.5" viewBox="0 0 59 58.5" preserveAspectRatio="xMinYMin slice" style="overflow:hidden"><rect width="59" height="59" fill="#d2d2d2"/>
<path d="M14 44 q20 -4 34 2 l0 8 q-20 4 -34 -2z" fill="#b08ae0" opacity="0.800" filter="url(#bl2)"/><ellipse cx="50" cy="48" rx="7" ry="5" fill="#fff" opacity="0.900" filter="url(#bl2)"/>
<path d="M11 13 l3 -4 l3 4 l-1 5 l-4 0z" fill="#8ab8e0" opacity="0.800" filter="url(#bl1)"/>
<ellipse cx="26" cy="29" rx="6.3" ry="4.8" transform="rotate(-45 26 29)" fill="#bcbcbc" filter="url(#bl1)"/>
<path d="M28.5 26.5 L38.4 16.6" stroke="#9a9a9a" stroke-width="6.9"/>
<path d="M27.8 25.8 L37.7 15.9" stroke="#f4f4f4" stroke-width="2.8"/>
<path d="M30.2 28.2 L40.1 18.3" stroke="#5a5a5a" stroke-width="1.7"/>
<path d="M38.4 16.6 L66.7 -11.7" stroke="#b89a6a" stroke-width="6.6"/>
</svg>
<svg x="1781.3" y="866" width="59" height="58.5" viewBox="0 0 59 58.5" preserveAspectRatio="xMinYMin slice" style="overflow:hidden"><rect width="59" height="59" fill="#d2d2d2"/>
<path d="M10 44 q14 -4 22 2 l0 8 q-14 4 -22 -2z" fill="#9a6ad8" opacity="0.800" filter="url(#bl2)"/><ellipse cx="44" cy="50" rx="9" ry="5" fill="#fff" opacity="0.900" filter="url(#bl2)"/>
<path d="M11 13 l3 -4 l3 4 l-1 5 l-4 0z" fill="#9ac0e0" opacity="0.800" filter="url(#bl1)"/>
<ellipse cx="26" cy="29" rx="7.4" ry="5.6" transform="rotate(-45 26 29)" fill="#3a2a2a" filter="url(#bl1)"/>
<path d="M29.2 25.8 L39.1 15.9" stroke="#9a9a9a" stroke-width="8.0"/>
<path d="M28.3 25.0 L38.2 15.1" stroke="#f4f4f4" stroke-width="3.2"/>
<path d="M31.1 27.8 L41.0 17.9" stroke="#5a5a5a" stroke-width="2.0"/>
<path d="M39.1 15.9 L67.3 -12.3" stroke="#d08a3a" stroke-width="7.6"/>
</svg>
<svg x="1841.3" y="866" width="59" height="58.5" viewBox="0 0 59 58.5" preserveAspectRatio="xMinYMin slice" style="overflow:hidden"><rect width="59" height="59" fill="#d2d2d2"/>
<path d="M28 50 q14 -12 30 -10 l0 16 l-30 0z" fill="#7ad070" opacity="0.800" filter="url(#bl2)"/><ellipse cx="20" cy="46" rx="9" ry="6" fill="#fff" opacity="0.900" filter="url(#bl2)"/>
<path d="M11 13 l3 -4 l3 4 l-1 5 l-4 0z" fill="#a0c8e8" opacity="0.800" filter="url(#bl1)"/>
<ellipse cx="26" cy="29" rx="6.3" ry="4.8" transform="rotate(-45 26 29)" fill="#4a4038" filter="url(#bl1)"/>
<path d="M28.5 26.5 L38.4 16.6" stroke="#9a9a9a" stroke-width="6.9"/>
<path d="M27.8 25.8 L37.7 15.9" stroke="#f4f4f4" stroke-width="2.8"/>
<path d="M30.2 28.2 L40.1 18.3" stroke="#5a5a5a" stroke-width="1.7"/>
<path d="M38.4 16.6 L66.7 -11.7" stroke="#b0a070" stroke-width="6.6"/>
</svg>
<svg x="1661" y="926" width="59" height="50" viewBox="0 0 59 58.5" preserveAspectRatio="xMinYMin slice" style="overflow:hidden"><rect width="59" height="59" fill="#d2d2d2"/>
<path d="M2 42 q20 -10 56 0 l0 16 l-56 0z" fill="#8ad888" opacity="0.700" filter="url(#bl2)"/><ellipse cx="16" cy="46" rx="8" ry="4" fill="#fff" opacity="0.800" filter="url(#bl2)"/>
<path d="M11 13 l3 -4 l3 4 l-1 5 l-4 0z" fill="#6ab8e8" opacity="0.800" filter="url(#bl1)"/>
<ellipse cx="26" cy="29" rx="8.4" ry="6.4" transform="rotate(-45 26 29)" fill="#5a3a38" filter="url(#bl1)"/>
<path d="M29.8 25.2 L39.7 15.3" stroke="#9a9a9a" stroke-width="9.2"/>
<path d="M28.8 24.2 L38.7 14.3" stroke="#f4f4f4" stroke-width="3.7"/>
<path d="M32.1 27.5 L42.0 17.6" stroke="#5a5a5a" stroke-width="2.3"/>
<path d="M39.7 15.3 L68.0 -13.0" stroke="#4a8ac0" stroke-width="8.7"/>
</svg>
<svg x="1721.3" y="926" width="59" height="50" viewBox="0 0 59 58.5" preserveAspectRatio="xMinYMin slice" style="overflow:hidden"><rect width="59" height="59" fill="#d2d2d2"/>
<path d="M2 42 q20 -10 56 0 l0 16 l-56 0z" fill="#a8e0a0" opacity="0.700" filter="url(#bl2)"/><ellipse cx="16" cy="46" rx="8" ry="4" fill="#fff" opacity="0.800" filter="url(#bl2)"/>
<path d="M11 13 l3 -4 l3 4 l-1 5 l-4 0z" fill="#8ac0e8" opacity="0.800" filter="url(#bl1)"/>
<path d="M19 32 L26.8 24.2" stroke="#d8a880" stroke-width="5.6" stroke-linecap="round" filter="url(#bl1)"/>
<path d="M27.5 23.5 L36.0 15.0" stroke="#9a9a9a" stroke-width="4.6"/>
<path d="M27.0 23.0 L35.5 14.5" stroke="#f4f4f4" stroke-width="1.8"/>
<path d="M28.6 24.6 L37.1 16.2" stroke="#5a5a5a" stroke-width="1.1"/>
<path d="M36.0 15.0 L64.3 -13.3" stroke="#3a8ab8" stroke-width="4.4"/>
</svg>
<svg x="1781.3" y="926" width="59" height="50" viewBox="0 0 59 58.5" preserveAspectRatio="xMinYMin slice" style="overflow:hidden"><rect width="59" height="59" fill="#d2d2d2"/>
<path d="M2 42 q20 -10 56 0 l0 16 l-56 0z" fill="#7ad078" opacity="0.700" filter="url(#bl2)"/><ellipse cx="16" cy="46" rx="8" ry="4" fill="#fff" opacity="0.800" filter="url(#bl2)"/>
<path d="M11 13 l3 -4 l3 4 l-1 5 l-4 0z" fill="#7ab8e8" opacity="0.800" filter="url(#bl1)"/>
<ellipse cx="26" cy="29" rx="7.4" ry="5.6" transform="rotate(-45 26 29)" fill="#d8a070" filter="url(#bl1)"/>
<path d="M29.2 25.8 L39.1 15.9" stroke="#9a9a9a" stroke-width="8.0"/>
<path d="M28.3 25.0 L38.2 15.1" stroke="#f4f4f4" stroke-width="3.2"/>
<path d="M31.1 27.8 L41.0 17.9" stroke="#5a5a5a" stroke-width="2.0"/>
<path d="M39.1 15.9 L67.3 -12.3" stroke="#5a9ac8" stroke-width="7.6"/>
</svg>
<svg x="1841.3" y="926" width="59" height="50" viewBox="0 0 59 58.5" preserveAspectRatio="xMinYMin slice" style="overflow:hidden"><rect width="59" height="59" fill="#d2d2d2"/>
<ellipse cx="20" cy="44" rx="9" ry="6" fill="#fff" opacity="0.950" filter="url(#bl2)"/>
<path d="M11 13 l3 -4 l3 4 l-1 5 l-4 0z" fill="#7ad8c0" opacity="0.800" filter="url(#bl1)"/>
<path d="M19 32 L26.8 24.2" stroke="#f0f0f0" stroke-width="7.0" stroke-linecap="round" filter="url(#bl1)"/>
<path d="M27.5 23.5 L36.0 15.0" stroke="#9a9a9a" stroke-width="5.8"/>
<path d="M26.9 22.9 L35.4 14.4" stroke="#f4f4f4" stroke-width="2.3"/>
<path d="M28.9 24.9 L37.4 16.4" stroke="#5a5a5a" stroke-width="1.4"/>
<path d="M36.0 15.0 L64.3 -13.3" stroke="#8ab8d8" stroke-width="5.5"/>
</svg>
</g>
<rect x="1905" y="686" width="10" height="290" fill="#444"/><path d="M1906.500 694 l3.500 -3.500 l3.500 3.500z M1906.500 964 l3.500 3.500 l3.500 -3.500z" fill="#a8a8a8"/>
<rect x="1660" y="978" width="149" height="25" rx="2" fill="#3f3f3f"/>
<path d="M1821 990 l3 4 l5.500 -8.500" fill="none" stroke="#d4d4d4" stroke-width="1.700"/>
</svg>
<span class="t dtitle" style="left:1684px;top:632.500px;font-size:14.500px">Brush Presets</span>
<span class="t" style="left:1664px;top:659px;font-size:14.500px;color:#d2d2d2">Paint</span>
<span class="t" style="left:1832px;top:659px;font-size:14.500px;color:#dedede">Tag</span>
<span class="t" style="left:1664px;top:980.500px;font-size:14px;color:#6c6c6c">Search</span>
<span class="t" style="left:1837px;top:980px;font-size:14.500px;color:#dedede">Filter in Tag</span><!--B1-->
</div>
<!--DK1-->
</div>
<div id="status" class="a">
<!--S0--><svg style="left:0;top:0" width="1920" height="38" viewBox="0 1005 1920 38">
<g fill="none" stroke="#b8b8b8" stroke-width="1.300"><rect x="8.500" y="1017.500" width="13" height="14"/><path d="M11 1021 H17 M11 1024.500 H19 M11 1028 H19 M19 1017 v5" stroke-width="1"/></g>
<rect x="1336" y="1010" width="1" height="30" fill="#3a3a3a"/>
<circle cx="1556" cy="1024" r="13" fill="#333"/>
<path d="M1548 1024 H1566 M1548.500 1020 V1028 M1563 1021 l3.500 3 l-3.500 3" stroke="#e2e2e2" stroke-width="1.500" fill="none"/>
<path d="M1814.500 1024.500 H1824" stroke="#c8c8c8" stroke-width="1.500"/>
<rect x="1836" y="1023" width="58" height="3" rx="1.500" fill="#434343"/>
<g fill="none" stroke="#dcdcdc" stroke-width="1.400"><rect x="1900.500" y="1017" width="12" height="15"/><rect x="1904" y="1022" width="5" height="5" fill="#dcdcdc" stroke="none"/></g>
</svg>
<span class="t" style="left:445px">RGB/Alpha (8-bit integer/channel)&nbsp; sRGB-elle-V2-srgbtrc.icc</span>
<span class="t" style="left:1341px">2.857 <u style="text-underline-offset:2px">x</u> 4.169 (346,9 MiB)</span>
<span class="t" style="left:1605px">0,00°</span>
<span class="t" style="left:1750px">21,4%</span>
<!--S1-->
</div>
</body>
</html>
